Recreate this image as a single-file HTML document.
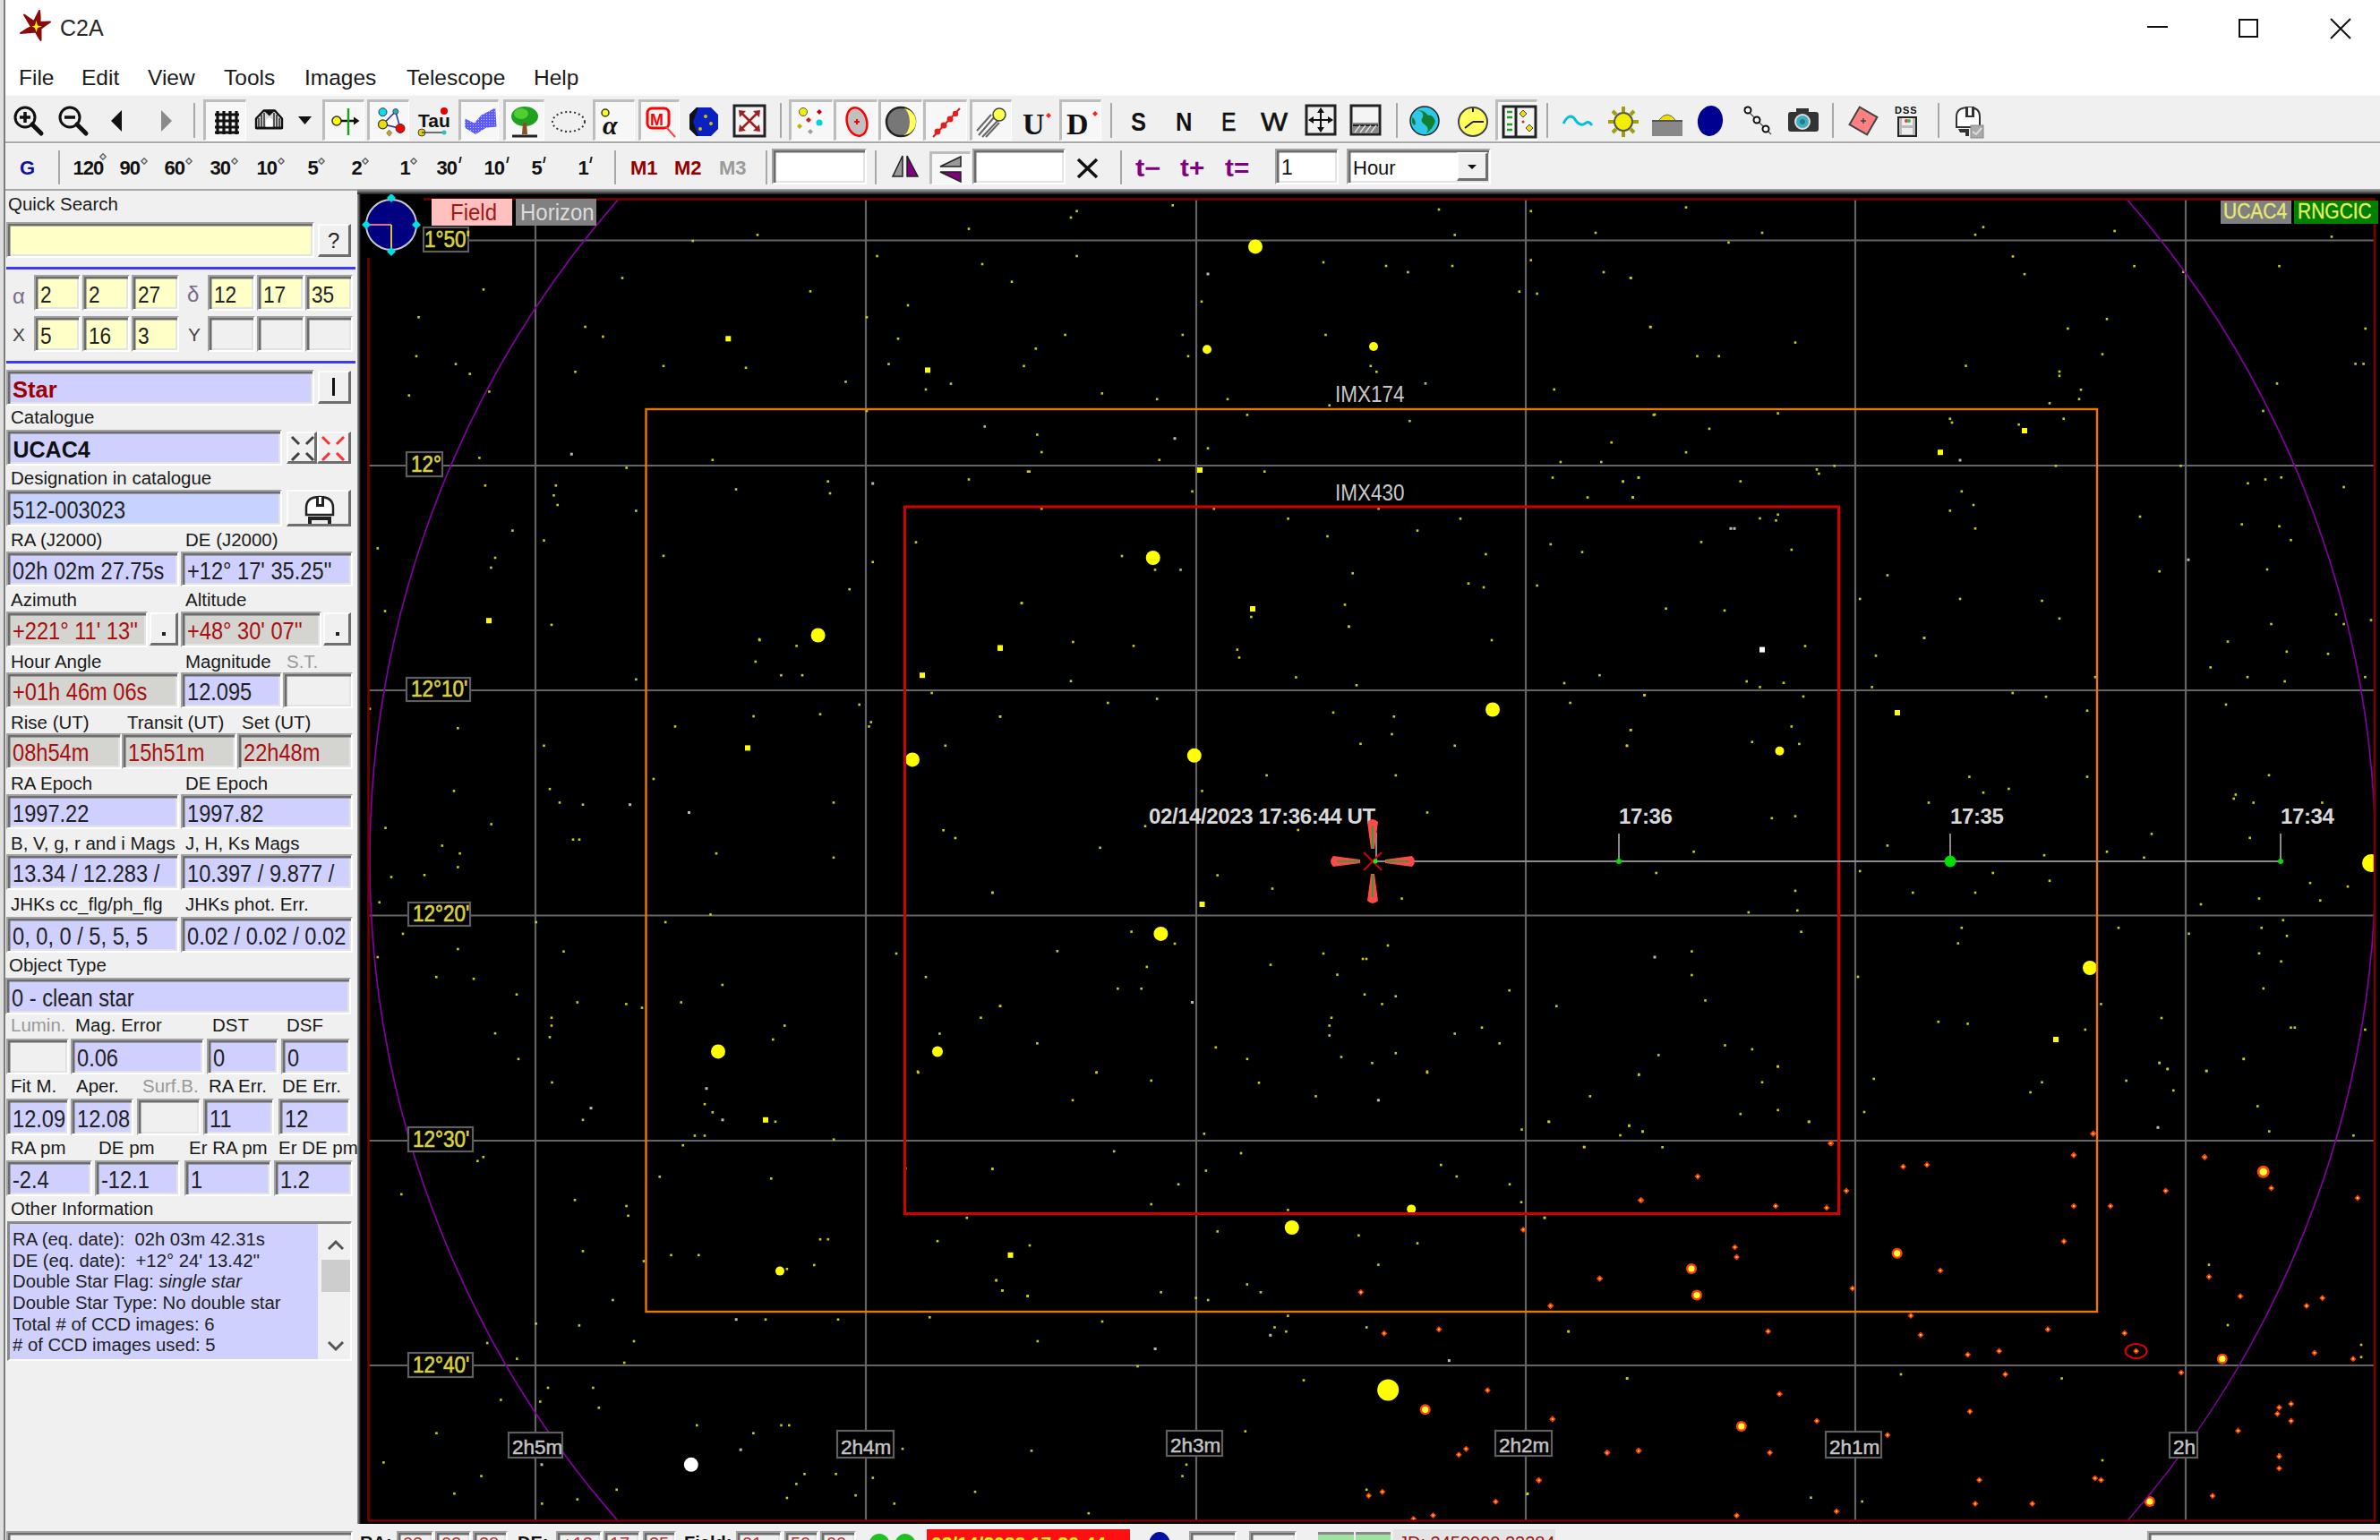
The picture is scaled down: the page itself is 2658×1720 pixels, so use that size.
<!DOCTYPE html>
<html><head><meta charset="utf-8"><title>C2A</title>
<style>
html,body{margin:0;padding:0;}
body{width:2658px;height:1720px;overflow:hidden;position:relative;background:#f0f0f0;font-family:"Liberation Sans", sans-serif;}
</style></head><body>
<div style="position:absolute;left:0px;top:0px;width:5px;height:1720px;background:#dedede;"></div>
<div style="position:absolute;left:4px;top:0px;width:2px;height:1720px;background:#7c7c7c;"></div>
<div style="position:absolute;left:6px;top:0px;width:2652px;height:105px;background:#ffffff;"></div>
<svg style="position:absolute;left:0px;top:0px" width="64" height="52" viewBox="0 0 64 52">
<path d="M44 12 Q45 19 44.5 25 L56 24.5 Q50 28.5 45.5 32 L45.5 45 Q42 40 40 35.5 L23 37 Q29 33 35 30 L27 16.5 Q33 21 38 24 Z" fill="#8a0a0a" stroke="#8a0a0a" stroke-width="2" stroke-linejoin="round"/>
<path d="M40.5 23 L42 28.5 L47 29.5 L42 31 L40.5 36 L39 31 L35.5 29.5 L39 28.5 Z" fill="#ffff00"/>
</svg>
<div style="position:absolute;left:67px;top:19.2px;font-size:25px;line-height:25px;color:#2a2a2a;font-weight:normal;white-space:nowrap;font-family:'Liberation Sans', sans-serif;">C2A</div>
<div style="position:absolute;left:2398px;top:29px;width:23px;height:2px;background:#111;"></div>
<div style="position:absolute;left:2500px;top:21px;width:22px;height:21px;border:2px solid #111;box-sizing:border-box;"></div>
<svg style="position:absolute;left:2602px;top:20px" width="24" height="24"><path d="M1 1 L23 23 M23 1 L1 23" stroke="#111" stroke-width="2"/></svg>
<div style="position:absolute;left:21px;top:74.7px;font-size:24.5px;line-height:24.5px;color:#1a1a1a;font-weight:normal;white-space:nowrap;font-family:'Liberation Sans', sans-serif;">File</div>
<div style="position:absolute;left:91px;top:74.7px;font-size:24.5px;line-height:24.5px;color:#1a1a1a;font-weight:normal;white-space:nowrap;font-family:'Liberation Sans', sans-serif;">Edit</div>
<div style="position:absolute;left:165px;top:74.7px;font-size:24.5px;line-height:24.5px;color:#1a1a1a;font-weight:normal;white-space:nowrap;font-family:'Liberation Sans', sans-serif;">View</div>
<div style="position:absolute;left:250px;top:74.7px;font-size:24.5px;line-height:24.5px;color:#1a1a1a;font-weight:normal;white-space:nowrap;font-family:'Liberation Sans', sans-serif;">Tools</div>
<div style="position:absolute;left:340px;top:74.7px;font-size:24.5px;line-height:24.5px;color:#1a1a1a;font-weight:normal;white-space:nowrap;font-family:'Liberation Sans', sans-serif;">Images</div>
<div style="position:absolute;left:454px;top:74.7px;font-size:24.5px;line-height:24.5px;color:#1a1a1a;font-weight:normal;white-space:nowrap;font-family:'Liberation Sans', sans-serif;">Telescope</div>
<div style="position:absolute;left:596px;top:74.7px;font-size:24.5px;line-height:24.5px;color:#1a1a1a;font-weight:normal;white-space:nowrap;font-family:'Liberation Sans', sans-serif;">Help</div>
<div style="position:absolute;left:6px;top:105px;width:2652px;height:108px;background:#f0f0f0;"></div>
<div style="position:absolute;left:6px;top:105px;width:2652px;height:2px;background:#fafafa;"></div>
<div style="position:absolute;left:6px;top:158px;width:2652px;height:2px;background:#a9a9a9;"></div>
<div style="position:absolute;left:6px;top:160px;width:2652px;height:1px;background:#ffffff;"></div>
<div style="position:absolute;left:6px;top:211px;width:2652px;height:2px;background:#a9a9a9;"></div>
<div style="position:absolute;left:227px;top:111px;width:48px;height:46px;box-sizing:border-box;background:#f7f7f7;border-top:3px solid #bdbdbd;border-left:3px solid #bdbdbd;border-bottom:1px solid #fff;border-right:1px solid #fff;"></div>
<div style="position:absolute;left:360px;top:111px;width:47px;height:46px;box-sizing:border-box;background:#f7f7f7;border-top:3px solid #bdbdbd;border-left:3px solid #bdbdbd;border-bottom:1px solid #fff;border-right:1px solid #fff;"></div>
<div style="position:absolute;left:410px;top:111px;width:47px;height:46px;box-sizing:border-box;background:#f7f7f7;border-top:3px solid #bdbdbd;border-left:3px solid #bdbdbd;border-bottom:1px solid #fff;border-right:1px solid #fff;"></div>
<div style="position:absolute;left:512px;top:111px;width:45px;height:46px;box-sizing:border-box;background:#f7f7f7;border-top:3px solid #bdbdbd;border-left:3px solid #bdbdbd;border-bottom:1px solid #fff;border-right:1px solid #fff;"></div>
<div style="position:absolute;left:562px;top:111px;width:46px;height:46px;box-sizing:border-box;background:#f7f7f7;border-top:3px solid #bdbdbd;border-left:3px solid #bdbdbd;border-bottom:1px solid #fff;border-right:1px solid #fff;"></div>
<div style="position:absolute;left:662px;top:111px;width:47px;height:46px;box-sizing:border-box;background:#f7f7f7;border-top:3px solid #bdbdbd;border-left:3px solid #bdbdbd;border-bottom:1px solid #fff;border-right:1px solid #fff;"></div>
<div style="position:absolute;left:713px;top:111px;width:46px;height:46px;box-sizing:border-box;background:#f7f7f7;border-top:3px solid #bdbdbd;border-left:3px solid #bdbdbd;border-bottom:1px solid #fff;border-right:1px solid #fff;"></div>
<div style="position:absolute;left:881px;top:111px;width:49px;height:46px;box-sizing:border-box;background:#f7f7f7;border-top:3px solid #bdbdbd;border-left:3px solid #bdbdbd;border-bottom:1px solid #fff;border-right:1px solid #fff;"></div>
<div style="position:absolute;left:931px;top:111px;width:49px;height:46px;box-sizing:border-box;background:#f7f7f7;border-top:3px solid #bdbdbd;border-left:3px solid #bdbdbd;border-bottom:1px solid #fff;border-right:1px solid #fff;"></div>
<div style="position:absolute;left:981px;top:111px;width:49px;height:46px;box-sizing:border-box;background:#f7f7f7;border-top:3px solid #bdbdbd;border-left:3px solid #bdbdbd;border-bottom:1px solid #fff;border-right:1px solid #fff;"></div>
<div style="position:absolute;left:1031px;top:111px;width:49px;height:46px;box-sizing:border-box;background:#f7f7f7;border-top:3px solid #bdbdbd;border-left:3px solid #bdbdbd;border-bottom:1px solid #fff;border-right:1px solid #fff;"></div>
<div style="position:absolute;left:1083px;top:111px;width:47px;height:46px;box-sizing:border-box;background:#f7f7f7;border-top:3px solid #bdbdbd;border-left:3px solid #bdbdbd;border-bottom:1px solid #fff;border-right:1px solid #fff;"></div>
<div style="position:absolute;left:1183px;top:111px;width:47px;height:46px;box-sizing:border-box;background:#f7f7f7;border-top:3px solid #bdbdbd;border-left:3px solid #bdbdbd;border-bottom:1px solid #fff;border-right:1px solid #fff;"></div>
<div style="position:absolute;left:1670px;top:111px;width:47px;height:46px;box-sizing:border-box;background:#f7f7f7;border-top:3px solid #bdbdbd;border-left:3px solid #bdbdbd;border-bottom:1px solid #fff;border-right:1px solid #fff;"></div>
<div style="position:absolute;left:216px;top:115px;width:2px;height:39px;background:#a8a8a8;"></div>
<div style="position:absolute;left:871px;top:115px;width:2px;height:39px;background:#a8a8a8;"></div>
<div style="position:absolute;left:1240px;top:115px;width:2px;height:39px;background:#a8a8a8;"></div>
<div style="position:absolute;left:1559px;top:115px;width:2px;height:39px;background:#a8a8a8;"></div>
<div style="position:absolute;left:1727px;top:115px;width:2px;height:39px;background:#a8a8a8;"></div>
<div style="position:absolute;left:2046px;top:115px;width:2px;height:39px;background:#a8a8a8;"></div>
<div style="position:absolute;left:2164px;top:115px;width:2px;height:39px;background:#a8a8a8;"></div>
<div style="position:absolute;left:1263px;top:121.9px;font-size:29px;line-height:29px;color:#111;font-weight:bold;white-space:nowrap;font-family:'Liberation Sans', sans-serif;transform:scaleX(0.88);transform-origin:0 0">S</div>
<div style="position:absolute;left:1313px;top:121.9px;font-size:29px;line-height:29px;color:#111;font-weight:bold;white-space:nowrap;font-family:'Liberation Sans', sans-serif;transform:scaleX(0.88);transform-origin:0 0">N</div>
<div style="position:absolute;left:1364px;top:121.9px;font-size:29px;line-height:29px;color:#111;font-weight:normal;white-space:nowrap;font-family:'Liberation Sans', sans-serif;transform:scaleX(0.85);transform-origin:0 0;-webkit-text-stroke:0.6px #111">E</div>
<div style="position:absolute;left:1408px;top:121.9px;font-size:29px;line-height:29px;color:#111;font-weight:normal;white-space:nowrap;font-family:'Liberation Sans', sans-serif;transform:scaleX(1.1);transform-origin:0 0;-webkit-text-stroke:0.6px #111">W</div>
<svg style="position:absolute;left:14px;top:117px" width="36" height="36" viewBox="0 0 36 36"><circle cx="14" cy="14" r="11" fill="none" stroke="#111" stroke-width="3"/><path d="M22 22 L32 32" stroke="#111" stroke-width="5" stroke-linecap="round"/><path d="M8 14 H20 M14 8 V20" stroke="#111" stroke-width="3.5"/></svg>
<svg style="position:absolute;left:64px;top:117px" width="36" height="36" viewBox="0 0 36 36"><circle cx="14" cy="14" r="11" fill="none" stroke="#111" stroke-width="3"/><path d="M22 22 L32 32" stroke="#111" stroke-width="5" stroke-linecap="round"/><path d="M8 14 H20" stroke="#111" stroke-width="3.5"/></svg>
<svg style="position:absolute;left:120px;top:120px" width="22" height="30" viewBox="0 0 22 30"><path d="M4 15 L16 3 L16 27 Z" fill="#111"/></svg>
<svg style="position:absolute;left:176px;top:120px" width="22" height="30" viewBox="0 0 22 30"><path d="M16 15 L4 3 L4 27 Z" fill="#8a8a8a"/></svg>
<svg style="position:absolute;left:238px;top:122px" width="30" height="30" viewBox="0 0 30 30"><path d="M5 2 V28 M12 2 V28 M19 2 V28 M26 2 V28 M2 6 H29 M2 13 H29 M2 20 H29 M2 26 H29" stroke="#111" stroke-width="3.2"/></svg>
<svg style="position:absolute;left:283px;top:122px" width="36" height="28" viewBox="0 0 36 28"><path d="M3 21 L3 10.5 L11.5 1.5 L24 1.5 L32 10.5 L32 21 Z" fill="#d8d8d8" stroke="#111" stroke-width="2.4" stroke-linejoin="round"/><path d="M6 20 V10 M9 20 V6 M12 20 V4 M23 20 V4 M26 20 V6 M29 20 V10" stroke="#333" stroke-width="1.6"/><path d="M11.5 1.5 L24 1.5 L17.8 7.5 Z" fill="#111"/><path d="M14 20 V12 L17.8 9 L21.5 12 V20 Z" fill="#fff"/><path d="M3 21 H32" stroke="#111" stroke-width="2.6"/></svg>
<svg style="position:absolute;left:332px;top:129px" width="17" height="11" viewBox="0 0 17 11"><path d="M1 1 L16 1 L8.5 10 Z" fill="#111"/></svg>
<svg style="position:absolute;left:366px;top:118px" width="40" height="36" viewBox="0 0 40 36"><circle cx="10" cy="17" r="5" fill="#ffff00" stroke="#333" stroke-width="1.5"/><path d="M15 17 H31" stroke="#111" stroke-width="2.5"/><path d="M29 12.5 L35.5 17 L29 21.5 Z" fill="#111"/><path d="M23 3 V33" stroke="#20a020" stroke-width="2.5"/></svg>
<svg style="position:absolute;left:416px;top:116px" width="40" height="40" viewBox="0 0 40 40"><path d="M25.8 8.5 L11.5 22.9 L31 27.4 Z" fill="none" stroke="#3030b0" stroke-width="1.6"/><circle cx="11.5" cy="9.2" r="4.5" fill="#00e0f0" stroke="#333" stroke-width="1"/><circle cx="25.8" cy="8.5" r="3" fill="#20b0c0" stroke="#333" stroke-width="0.8"/><circle cx="11.5" cy="22.9" r="5" fill="#e8e000" stroke="#333" stroke-width="1.2"/><circle cx="31" cy="27.4" r="5" fill="#ff0000" stroke="#333" stroke-width="1"/><path d="M18.7 29 L21.7 32.6 L18.7 36.2 L15.7 32.6 Z" fill="#c0a820" stroke="#555" stroke-width="0.6"/></svg>
<svg style="position:absolute;left:466px;top:118px" width="38" height="36" viewBox="0 0 38 36"><text x="1" y="24" font-family="Liberation Sans" font-weight="bold" font-size="21" fill="#111">Tau</text><circle cx="30" cy="6" r="4" fill="#e00000"/><circle cx="5" cy="30" r="4" fill="#e0d000" stroke="#444" stroke-width="1"/><path d="M5 30 H30" stroke="#444" stroke-width="1.5"/><circle cx="30" cy="30" r="2.5" fill="#30c0c0"/></svg>
<svg style="position:absolute;left:516px;top:118px" width="42" height="36" viewBox="0 0 42 36"><defs><pattern id="dith" width="3" height="3" patternUnits="userSpaceOnUse"><rect width="3" height="3" fill="#5a5aff"/><rect width="1" height="1" fill="#c8c8ff"/></pattern></defs><path d="M3.3 14.4 L13.8 19.6 L21.6 10.4 L37.2 2.6 L38.5 23.5 L26.8 24.8 L15 32 L3.3 24.8 Z" fill="url(#dith)"/></svg>
<svg style="position:absolute;left:567px;top:117px" width="38" height="38" viewBox="0 0 38 38"><ellipse cx="19" cy="13" rx="15" ry="11" fill="#20a020"/><ellipse cx="15" cy="10" rx="8" ry="6" fill="#50d030"/><path d="M17 20 L16 33 L22 33 L21 20 Z" fill="#8a5020"/><path d="M5 35 H33" stroke="#222" stroke-width="3"/></svg>
<svg style="position:absolute;left:614px;top:122px" width="42" height="28" viewBox="0 0 42 28"><ellipse cx="21" cy="14" rx="18" ry="11" fill="none" stroke="#333" stroke-width="2" stroke-dasharray="2 3"/></svg>
<svg style="position:absolute;left:670px;top:120px" width="36" height="34" viewBox="0 0 36 34"><circle cx="6" cy="6" r="4" fill="#ffff00" stroke="#333" stroke-width="1.5"/><text x="3" y="30" font-family="Liberation Serif" font-style="italic" font-weight="bold" font-size="30" fill="#111">α</text></svg>
<svg style="position:absolute;left:720px;top:118px" width="38" height="38" viewBox="0 0 38 38"><rect x="3" y="3" width="24" height="22" rx="5" fill="none" stroke="#ff0000" stroke-width="3"/><text x="6" y="22" font-family="Liberation Sans" font-weight="bold" font-size="18" fill="#ff0000">M</text><path d="M24 24 L34 35" stroke="#ff4040" stroke-width="2"/></svg>
<svg style="position:absolute;left:768px;top:118px" width="36" height="36" viewBox="0 0 36 36"><path d="M10 2 H26 L34 10 V26 L26 34 H10 L2 26 V10 Z" fill="#0a20c0"/><path d="M2 10 L10 2 L12 2 L6 18 L12 34 L10 34 L2 26 Z" fill="#111"/><circle cx="20" cy="12" r="2" fill="#d0c000"/><circle cx="26" cy="20" r="2" fill="#d0c000"/><circle cx="14" cy="26" r="2" fill="#d0c000"/></svg>
<svg style="position:absolute;left:818px;top:116px" width="38" height="38" viewBox="0 0 38 38"><rect x="2" y="2" width="34" height="34" fill="#f4f4f4" stroke="#222" stroke-width="3"/><path d="M9 9 L29 29 M29 9 L9 29" stroke="#a02020" stroke-width="2.5"/><path d="M7 7 L15 8 L8 15 Z M31 7 L23 8 L30 15 Z M7 31 L15 30 L8 23 Z M31 31 L23 30 L30 23 Z" fill="#a02020"/></svg>
<svg style="position:absolute;left:887px;top:118px" width="40" height="36" viewBox="0 0 40 36"><circle cx="10" cy="7" r="4.5" fill="#f0f000" stroke="#555" stroke-width="1"/><path d="M28 4 L31 7 L28 10 L25 7 Z" fill="#c00000"/><path d="M16 13 L19 16 L16 19 L13 16 Z" fill="#c02020"/><circle cx="28" cy="19" r="3.5" fill="#00d0e0"/><path d="M6 20 L9 23 L6 26 L3 23 Z" fill="#c0b000"/><path d="M18 26 L21 29 L18 32 L15 29 Z" fill="#a0a0a0"/></svg>
<svg style="position:absolute;left:940px;top:117px" width="34" height="38" viewBox="0 0 34 38"><ellipse cx="17" cy="19" rx="11" ry="16" fill="#c0c0c0" stroke="#ff0000" stroke-width="2.5" transform="rotate(-15 17 19)"/><path d="M17 16 V22 M14 19 H20" stroke="#ff0000" stroke-width="2"/></svg>
<svg style="position:absolute;left:988px;top:118px" width="36" height="36" viewBox="0 0 36 36"><circle cx="18" cy="18" r="16" fill="#777" stroke="#222" stroke-width="2.5"/><path d="M20 3 A15 15 0 0 1 20 33 A8 15 0 0 0 20 3 Z" fill="#ffff60"/></svg>
<svg style="position:absolute;left:1039px;top:118px" width="36" height="38" viewBox="0 0 36 38"><path d="M3 35 L33 3" stroke="#d02020" stroke-width="2"/><circle cx="8" cy="29" r="3.5" fill="#e02020"/><circle cx="15" cy="22" r="3.5" fill="#e02020"/><circle cx="22" cy="15" r="3.5" fill="#e02020"/><circle cx="28" cy="9" r="3.2" fill="#e02020"/></svg>
<svg style="position:absolute;left:1089px;top:118px" width="38" height="36" viewBox="0 0 38 36"><path d="M4 33 L22 12 M2 28 L18 10 M8 35 L26 16 M12 35 L27 19" stroke="#666" stroke-width="2"/><circle cx="27" cy="10" r="7" fill="#ffff50" stroke="#444" stroke-width="1.5"/></svg>
<svg style="position:absolute;left:1140px;top:118px" width="38" height="36" viewBox="0 0 38 36"><text x="2" y="32" font-family="Liberation Serif" font-weight="bold" font-size="34" fill="#111">U</text><path d="M31 8 L34 11 L31 14 L28 11 Z" fill="#ff2020"/></svg>
<svg style="position:absolute;left:1189px;top:118px" width="40" height="36" viewBox="0 0 40 36"><text x="2" y="32" font-family="Liberation Serif" font-weight="bold" font-size="34" fill="#111">D</text><path d="M34 6 L37 9 L34 12 L31 9 Z" fill="#ff2020"/></svg>
<svg style="position:absolute;left:1457px;top:116px" width="36" height="36" viewBox="0 0 36 36"><rect x="2" y="2" width="32" height="32" fill="none" stroke="#222" stroke-width="3"/><path d="M18 5 V31 M5 18 H31" stroke="#111" stroke-width="2"/><path d="M18 4 L14 10 H22 Z M18 32 L14 26 H22 Z M4 18 L10 14 V22 Z M32 18 L26 14 V22 Z" fill="#111"/></svg>
<svg style="position:absolute;left:1507px;top:116px" width="36" height="36" viewBox="0 0 36 36"><rect x="2" y="2" width="32" height="32" fill="#f4f4f4" stroke="#222" stroke-width="3"/><rect x="4" y="21" width="28" height="11" fill="#888"/><path d="M4 24 H32" stroke="#222" stroke-width="2"/><path d="M6 32 L12 24 M12 32 L18 24 M18 32 L24 24 M24 32 L30 24" stroke="#ddd" stroke-width="1.5"/></svg>
<svg style="position:absolute;left:1573px;top:117px" width="36" height="36" viewBox="0 0 36 36"><circle cx="18" cy="18" r="16" fill="#30c8e8" stroke="#222" stroke-width="1.5"/><path d="M10 6 Q18 8 16 14 Q12 18 18 22 Q24 26 20 32 Q28 26 30 18 Q26 10 22 12 Q18 6 10 6 Z" fill="#108030"/><path d="M4 14 Q8 16 8 22 Q6 24 4 20 Z" fill="#108030"/></svg>
<svg style="position:absolute;left:1626px;top:117px" width="38" height="38" viewBox="0 0 38 38"><circle cx="19" cy="19" r="16" fill="#ffff60" stroke="#444" stroke-width="2"/><path d="M19 4 V8 M19 19 L10 26 M19 19 H31" stroke="#222" stroke-width="2"/></svg>
<svg style="position:absolute;left:1677px;top:117px" width="40" height="38" viewBox="0 0 40 38"><rect x="2" y="2" width="36" height="34" fill="#f4f4f4" stroke="#222" stroke-width="3"/><path d="M16 2 V36" stroke="#222" stroke-width="3"/><path d="M6 8 H12 M6 14 H12 M6 22 H12 M6 28 H12" stroke="#20a020" stroke-width="2.5"/><path d="M24 6 L28 10 L24 14 L20 10 Z M31 22 L35 26 L31 30 L27 26 Z" fill="#f0e000" stroke="#444" stroke-width="1"/><circle cx="24" cy="19" r="1.5" fill="#c03030"/></svg>
<svg style="position:absolute;left:1744px;top:122px" width="36" height="26" viewBox="0 0 36 26"><path d="M2 16 Q8 4 14 10 Q20 20 26 16 Q30 12 34 18" fill="none" stroke="#00c0e0" stroke-width="3"/></svg>
<svg style="position:absolute;left:1794px;top:117px" width="38" height="38" viewBox="0 0 38 38"><circle cx="19" cy="19" r="10" fill="#f0f000" stroke="#555" stroke-width="2"/><path d="M19 2 V8 M19 30 V36 M2 19 H8 M30 19 H36 M7 7 L11 11 M27 27 L31 31 M31 7 L27 11 M7 31 L11 27" stroke="#a0a000" stroke-width="4"/></svg>
<svg style="position:absolute;left:1842px;top:117px" width="40" height="38" viewBox="0 0 40 38"><path d="M10 18 Q20 4 30 18 Z" fill="#f0e000" stroke="#666" stroke-width="1"/><rect x="3" y="17" width="34" height="18" fill="#888"/><path d="M3 18 H37" stroke="#444" stroke-width="1.5"/></svg>
<svg style="position:absolute;left:1892px;top:116px" width="36" height="38" viewBox="0 0 36 38"><ellipse cx="18" cy="19" rx="14" ry="17" fill="#000090" transform="rotate(10 18 19)"/></svg>
<svg style="position:absolute;left:1944px;top:116px" width="38" height="38" viewBox="0 0 38 38"><path d="M4 4 L34 34" stroke="#555" stroke-width="1.5"/><circle cx="8" cy="7" r="3.5" fill="#fff" stroke="#111" stroke-width="2"/><circle cx="18" cy="18" r="3.5" fill="#fff" stroke="#111" stroke-width="2"/><circle cx="28" cy="28" r="3.5" fill="#fff" stroke="#111" stroke-width="2"/></svg>
<svg style="position:absolute;left:1995px;top:117px" width="38" height="34" viewBox="0 0 38 34"><rect x="2" y="8" width="34" height="22" rx="3" fill="#333"/><rect x="11" y="4" width="14" height="6" fill="#333"/><circle cx="18" cy="19" r="8" fill="#40b0c0" stroke="#ddd" stroke-width="2"/><circle cx="18" cy="19" r="3" fill="#208090"/></svg>
<svg style="position:absolute;left:2062px;top:116px" width="38" height="38" viewBox="0 0 38 38"><path d="M19 3 L35 19 L19 35 L3 19 Z" fill="#ff8080" stroke="#444" stroke-width="2" transform="rotate(-15 19 19)"/><path d="M19 16 V22 M16 19 H22" stroke="#444" stroke-width="1.5"/></svg>
<svg style="position:absolute;left:2115px;top:116px" width="34" height="38" viewBox="0 0 34 38"><text x="1" y="11" font-family="Liberation Sans" font-weight="bold" font-size="11" fill="#111" letter-spacing="1">DSS</text><rect x="5" y="15" width="20" height="21" fill="#bbb" stroke="#222" stroke-width="2"/><rect x="9" y="16" width="12" height="8" fill="#eee"/><rect x="9" y="27" width="12" height="7" fill="#eee"/><circle cx="14" cy="19" r="2" fill="#e04040"/><circle cx="17" cy="19" r="2" fill="#40c040"/></svg>
<svg style="position:absolute;left:2181px;top:116px" width="38" height="40" viewBox="0 0 38 40"><path d="M4 14 Q4 4 18 4 Q30 4 30 14 L30 26 L4 26 Z" fill="#fff" stroke="#333" stroke-width="2"/><rect x="14" y="3" width="10" height="12" fill="#333"/><rect x="17" y="4" width="4" height="9" fill="#fff"/><path d="M6 28 H18 V36 H14 V32 H8 Z" fill="#333"/><rect x="20" y="24" width="14" height="14" fill="#aaa" stroke="#888" stroke-width="1"/><path d="M22 31 L26 34 L32 27" stroke="#ddd" stroke-width="2" fill="none"/></svg>
<div style="position:absolute;left:22px;top:176.7px;font-size:22px;line-height:22px;color:#1010a0;font-weight:bold;white-space:nowrap;font-family:'Liberation Sans', sans-serif;">G</div>
<div style="position:absolute;left:65px;top:168px;width:2px;height:38px;background:#a8a8a8;"></div>
<div style="position:absolute;left:81.5px;top:177.2px;font-size:22px;line-height:22px;color:#111;font-weight:bold;white-space:nowrap;font-family:'Liberation Sans', sans-serif;letter-spacing:-1px">120</div>
<svg style="position:absolute;left:110.7px;top:171px" width="8" height="8"><path d="M4 0.8 L7.2 4 L4 7.2 L0.8 4 Z" fill="#e8e8e8" stroke="#666" stroke-width="1.5"/></svg>
<div style="position:absolute;left:133.5px;top:177.2px;font-size:22px;line-height:22px;color:#111;font-weight:bold;white-space:nowrap;font-family:'Liberation Sans', sans-serif;letter-spacing:-1px">90</div>
<svg style="position:absolute;left:156.5px;top:176px" width="8" height="8"><path d="M4 0.8 L7.2 4 L4 7.2 L0.8 4 Z" fill="#e8e8e8" stroke="#666" stroke-width="1.5"/></svg>
<div style="position:absolute;left:183.5px;top:177.2px;font-size:22px;line-height:22px;color:#111;font-weight:bold;white-space:nowrap;font-family:'Liberation Sans', sans-serif;letter-spacing:-1px">60</div>
<svg style="position:absolute;left:206.5px;top:176px" width="8" height="8"><path d="M4 0.8 L7.2 4 L4 7.2 L0.8 4 Z" fill="#e8e8e8" stroke="#666" stroke-width="1.5"/></svg>
<div style="position:absolute;left:234.5px;top:177.2px;font-size:22px;line-height:22px;color:#111;font-weight:bold;white-space:nowrap;font-family:'Liberation Sans', sans-serif;letter-spacing:-1px">30</div>
<svg style="position:absolute;left:257.5px;top:176px" width="8" height="8"><path d="M4 0.8 L7.2 4 L4 7.2 L0.8 4 Z" fill="#e8e8e8" stroke="#666" stroke-width="1.5"/></svg>
<div style="position:absolute;left:286.5px;top:177.2px;font-size:22px;line-height:22px;color:#111;font-weight:bold;white-space:nowrap;font-family:'Liberation Sans', sans-serif;letter-spacing:-1px">10</div>
<svg style="position:absolute;left:309.5px;top:176px" width="8" height="8"><path d="M4 0.8 L7.2 4 L4 7.2 L0.8 4 Z" fill="#e8e8e8" stroke="#666" stroke-width="1.5"/></svg>
<div style="position:absolute;left:343.5px;top:177.2px;font-size:22px;line-height:22px;color:#111;font-weight:bold;white-space:nowrap;font-family:'Liberation Sans', sans-serif;letter-spacing:-1px">5</div>
<svg style="position:absolute;left:355.2px;top:176px" width="8" height="8"><path d="M4 0.8 L7.2 4 L4 7.2 L0.8 4 Z" fill="#e8e8e8" stroke="#666" stroke-width="1.5"/></svg>
<div style="position:absolute;left:392.5px;top:177.2px;font-size:22px;line-height:22px;color:#111;font-weight:bold;white-space:nowrap;font-family:'Liberation Sans', sans-serif;letter-spacing:-1px">2</div>
<svg style="position:absolute;left:404.2px;top:176px" width="8" height="8"><path d="M4 0.8 L7.2 4 L4 7.2 L0.8 4 Z" fill="#e8e8e8" stroke="#666" stroke-width="1.5"/></svg>
<div style="position:absolute;left:446.5px;top:177.2px;font-size:22px;line-height:22px;color:#111;font-weight:bold;white-space:nowrap;font-family:'Liberation Sans', sans-serif;letter-spacing:-1px">1</div>
<svg style="position:absolute;left:458.2px;top:176px" width="8" height="8"><path d="M4 0.8 L7.2 4 L4 7.2 L0.8 4 Z" fill="#e8e8e8" stroke="#666" stroke-width="1.5"/></svg>
<div style="position:absolute;left:487.5px;top:177.2px;font-size:22px;line-height:22px;color:#111;font-weight:bold;white-space:nowrap;font-family:'Liberation Sans', sans-serif;letter-spacing:-1px">30</div>
<div style="position:absolute;left:512.5px;top:175px;width:2.4px;height:7px;background:#222;transform:skewX(-12deg)"></div>
<div style="position:absolute;left:540.5px;top:177.2px;font-size:22px;line-height:22px;color:#111;font-weight:bold;white-space:nowrap;font-family:'Liberation Sans', sans-serif;letter-spacing:-1px">10</div>
<div style="position:absolute;left:565.5px;top:175px;width:2.4px;height:7px;background:#222;transform:skewX(-12deg)"></div>
<div style="position:absolute;left:593.5px;top:177.2px;font-size:22px;line-height:22px;color:#111;font-weight:bold;white-space:nowrap;font-family:'Liberation Sans', sans-serif;letter-spacing:-1px">5</div>
<div style="position:absolute;left:607.2px;top:175px;width:2.4px;height:7px;background:#222;transform:skewX(-12deg)"></div>
<div style="position:absolute;left:645.5px;top:177.2px;font-size:22px;line-height:22px;color:#111;font-weight:bold;white-space:nowrap;font-family:'Liberation Sans', sans-serif;letter-spacing:-1px">1</div>
<div style="position:absolute;left:659.2px;top:175px;width:2.4px;height:7px;background:#222;transform:skewX(-12deg)"></div>
<div style="position:absolute;left:686px;top:168px;width:2px;height:38px;background:#a8a8a8;"></div>
<div style="position:absolute;left:704px;top:177.2px;font-size:22px;line-height:22px;color:#900000;font-weight:bold;white-space:nowrap;font-family:'Liberation Sans', sans-serif;">M1</div>
<div style="position:absolute;left:753px;top:177.2px;font-size:22px;line-height:22px;color:#900000;font-weight:bold;white-space:nowrap;font-family:'Liberation Sans', sans-serif;">M2</div>
<div style="position:absolute;left:803px;top:177.2px;font-size:22px;line-height:22px;color:#9a9a9a;font-weight:bold;white-space:nowrap;font-family:'Liberation Sans', sans-serif;">M3</div>
<div style="position:absolute;left:855px;top:168px;width:2px;height:38px;background:#a8a8a8;"></div>
<div style="position:absolute;left:862px;top:165.5px;width:106px;height:40.5px;box-sizing:border-box;background:#ffffff;border-top:2px solid #a3a3a3;border-left:2px solid #a3a3a3;border-bottom:2px solid #ffffff;border-right:2px solid #ffffff;box-shadow:inset 2.5px 2.5px 0 #6c6c6c, inset -2px -2px 0 #e3e3e3;overflow:hidden;"></div>
<div style="position:absolute;left:977px;top:168px;width:2px;height:38px;background:#a8a8a8;"></div>
<svg style="position:absolute;left:994px;top:172px" width="34" height="28" viewBox="0 0 34 28"><path d="M14 2 L3 25 L14 25 Z" fill="#9a9a9a" stroke="#222" stroke-width="1.5"/><path d="M19 2 L31 25 L19 25 Z" fill="#800080" stroke="#222" stroke-width="1.5"/></svg>
<div style="position:absolute;left:1038px;top:169px;width:46px;height:37px;box-sizing:border-box;background:#f7f7f7;border-top:3px solid #bdbdbd;border-left:3px solid #bdbdbd;border-bottom:1px solid #fff;border-right:1px solid #fff;"></div>
<svg style="position:absolute;left:1047px;top:172px" width="30" height="34" viewBox="0 0 30 34"><path d="M26 3 L3 14 L26 14 Z" fill="#9a9a9a" stroke="#222" stroke-width="1.5"/><path d="M26 31 L3 20 L26 20 Z" fill="#800080" stroke="#222" stroke-width="1.5"/></svg>
<div style="position:absolute;left:1086px;top:165.5px;width:104px;height:40.5px;box-sizing:border-box;background:#ffffff;border-top:2px solid #a3a3a3;border-left:2px solid #a3a3a3;border-bottom:2px solid #ffffff;border-right:2px solid #ffffff;box-shadow:inset 2.5px 2.5px 0 #6c6c6c, inset -2px -2px 0 #e3e3e3;overflow:hidden;"></div>
<svg style="position:absolute;left:1201px;top:175px" width="28" height="26" viewBox="0 0 28 26"><path d="M3 3 L24 23 M24 3 L3 23" stroke="#111" stroke-width="3.5"/></svg>
<div style="position:absolute;left:1251px;top:168px;width:2px;height:38px;background:#a8a8a8;"></div>
<div style="position:absolute;left:1268px;top:174.6px;font-size:27px;line-height:27px;color:#800080;font-weight:bold;white-space:nowrap;font-family:'Liberation Sans', sans-serif;transform:scaleX(1.15);transform-origin:0 0">t−</div>
<div style="position:absolute;left:1318px;top:174.6px;font-size:27px;line-height:27px;color:#800080;font-weight:bold;white-space:nowrap;font-family:'Liberation Sans', sans-serif;transform:scaleX(1.1);transform-origin:0 0">t+</div>
<div style="position:absolute;left:1368px;top:174.6px;font-size:27px;line-height:27px;color:#800080;font-weight:bold;white-space:nowrap;font-family:'Liberation Sans', sans-serif;transform:scaleX(1.1);transform-origin:0 0">t=</div>
<div style="position:absolute;left:1424px;top:165.5px;width:71px;height:40.5px;box-sizing:border-box;background:#ffffff;border-top:2px solid #a3a3a3;border-left:2px solid #a3a3a3;border-bottom:2px solid #ffffff;border-right:2px solid #ffffff;box-shadow:inset 2.5px 2.5px 0 #6c6c6c, inset -2px -2px 0 #e3e3e3;overflow:hidden;"><div style="position:absolute;left:5px;top:8.4px;font-size:23.0px;line-height:23.0px;color:#111;font-weight:normal;letter-spacing:0px;white-space:nowrap;transform:scaleX(1);transform-origin:0 0">1</div></div>
<div style="position:absolute;left:1504px;top:165.5px;width:161px;height:40.5px;box-sizing:border-box;background:#ffffff;border-top:2px solid #a3a3a3;border-left:2px solid #a3a3a3;border-bottom:2px solid #ffffff;border-right:2px solid #ffffff;box-shadow:inset 2.5px 2.5px 0 #6c6c6c, inset -2px -2px 0 #e3e3e3;overflow:hidden;"><div style="position:absolute;left:5px;top:9.2px;font-size:22.0px;line-height:22.0px;color:#111;font-weight:normal;letter-spacing:0px;white-space:nowrap;transform:scaleX(1);transform-origin:0 0">Hour</div></div>
<div style="position:absolute;left:1627px;top:170px;width:35px;height:32px;box-sizing:border-box;background:#f0f0f0;border-top:2px solid #fdfdfd;border-left:2px solid #fdfdfd;border-bottom:3px solid #6e6e6e;border-right:3px solid #6e6e6e;overflow:hidden"><svg width="30" height="26" style="position:absolute;left:0;top:0"><path d="M10 12 L20 12 L15 17 Z" fill="#111"/></svg></div>
<div style="position:absolute;left:6px;top:213px;width:393px;height:1489px;background:#f0f0f0;"></div>
<div style="position:absolute;left:399px;top:213px;width:4px;height:1489px;background:linear-gradient(90deg,#a0a0a0,#555 50%,#000);"></div>
<div style="position:absolute;left:399px;top:211px;width:2259px;height:6px;background:linear-gradient(180deg,#a9a9a9,#6a6a6a 50%,#1a1a1a);"></div>
<div style="position:absolute;left:9px;top:218.8px;font-size:19.5px;line-height:19.5px;color:#1a1a1a;font-weight:normal;white-space:nowrap;font-family:'Liberation Sans', sans-serif;transform:scaleX(1.05);transform-origin:0 0">Quick Search</div>
<div style="position:absolute;left:7px;top:247.5px;width:344px;height:40.5px;box-sizing:border-box;background:#ffffc8;border-top:2px solid #a3a3a3;border-left:2px solid #a3a3a3;border-bottom:2px solid #ffffff;border-right:2px solid #ffffff;box-shadow:inset 2.5px 2.5px 0 #6c6c6c, inset -2px -2px 0 #e3e3e3;overflow:hidden;"></div>
<div style="position:absolute;left:355px;top:250px;width:37px;height:37px;box-sizing:border-box;background:#f0f0f0;border-top:2px solid #fdfdfd;border-left:2px solid #fdfdfd;border-bottom:3px solid #6e6e6e;border-right:3px solid #6e6e6e;overflow:hidden"><div style="position:absolute;left:9px;top:3px;font-size:24px;color:#222">?</div></div>
<div style="position:absolute;left:7px;top:298px;width:390px;height:3px;background:#3a3aff;"></div>
<div style="position:absolute;left:14px;top:319.1px;font-size:24px;line-height:24px;color:#7a6a8a;font-weight:normal;white-space:nowrap;font-family:'Liberation Sans', sans-serif;">α</div>
<div style="position:absolute;left:209px;top:317.1px;font-size:24px;line-height:24px;color:#7a6a8a;font-weight:normal;white-space:nowrap;font-family:'Liberation Sans', sans-serif;">δ</div>
<div style="position:absolute;left:38px;top:306.5px;width:52px;height:40.5px;box-sizing:border-box;background:#ffffc8;border-top:2px solid #a3a3a3;border-left:2px solid #a3a3a3;border-bottom:2px solid #ffffff;border-right:2px solid #ffffff;box-shadow:inset 2.5px 2.5px 0 #6c6c6c, inset -2px -2px 0 #e3e3e3;overflow:hidden;"><div style="position:absolute;left:5px;top:8.0px;font-size:25.9px;line-height:25.9px;color:#222;font-weight:normal;letter-spacing:0px;white-space:nowrap;transform:scaleX(0.875);transform-origin:0 0">2</div></div>
<div style="position:absolute;left:92px;top:306.5px;width:53px;height:40.5px;box-sizing:border-box;background:#ffffc8;border-top:2px solid #a3a3a3;border-left:2px solid #a3a3a3;border-bottom:2px solid #ffffff;border-right:2px solid #ffffff;box-shadow:inset 2.5px 2.5px 0 #6c6c6c, inset -2px -2px 0 #e3e3e3;overflow:hidden;"><div style="position:absolute;left:5px;top:8.0px;font-size:25.9px;line-height:25.9px;color:#222;font-weight:normal;letter-spacing:0px;white-space:nowrap;transform:scaleX(0.875);transform-origin:0 0">2</div></div>
<div style="position:absolute;left:147px;top:306.5px;width:53px;height:40.5px;box-sizing:border-box;background:#ffffc8;border-top:2px solid #a3a3a3;border-left:2px solid #a3a3a3;border-bottom:2px solid #ffffff;border-right:2px solid #ffffff;box-shadow:inset 2.5px 2.5px 0 #6c6c6c, inset -2px -2px 0 #e3e3e3;overflow:hidden;"><div style="position:absolute;left:5px;top:8.0px;font-size:25.9px;line-height:25.9px;color:#222;font-weight:normal;letter-spacing:0px;white-space:nowrap;transform:scaleX(0.875);transform-origin:0 0">27</div></div>
<div style="position:absolute;left:232px;top:306.5px;width:53px;height:40.5px;box-sizing:border-box;background:#ffffc8;border-top:2px solid #a3a3a3;border-left:2px solid #a3a3a3;border-bottom:2px solid #ffffff;border-right:2px solid #ffffff;box-shadow:inset 2.5px 2.5px 0 #6c6c6c, inset -2px -2px 0 #e3e3e3;overflow:hidden;"><div style="position:absolute;left:5px;top:8.0px;font-size:25.9px;line-height:25.9px;color:#222;font-weight:normal;letter-spacing:0px;white-space:nowrap;transform:scaleX(0.875);transform-origin:0 0">12</div></div>
<div style="position:absolute;left:287px;top:306.5px;width:53px;height:40.5px;box-sizing:border-box;background:#ffffc8;border-top:2px solid #a3a3a3;border-left:2px solid #a3a3a3;border-bottom:2px solid #ffffff;border-right:2px solid #ffffff;box-shadow:inset 2.5px 2.5px 0 #6c6c6c, inset -2px -2px 0 #e3e3e3;overflow:hidden;"><div style="position:absolute;left:5px;top:8.0px;font-size:25.9px;line-height:25.9px;color:#222;font-weight:normal;letter-spacing:0px;white-space:nowrap;transform:scaleX(0.875);transform-origin:0 0">17</div></div>
<div style="position:absolute;left:341px;top:306.5px;width:53px;height:40.5px;box-sizing:border-box;background:#ffffc8;border-top:2px solid #a3a3a3;border-left:2px solid #a3a3a3;border-bottom:2px solid #ffffff;border-right:2px solid #ffffff;box-shadow:inset 2.5px 2.5px 0 #6c6c6c, inset -2px -2px 0 #e3e3e3;overflow:hidden;"><div style="position:absolute;left:5px;top:8.0px;font-size:25.9px;line-height:25.9px;color:#222;font-weight:normal;letter-spacing:0px;white-space:nowrap;transform:scaleX(0.875);transform-origin:0 0">35</div></div>
<div style="position:absolute;left:14px;top:362.6px;font-size:21px;line-height:21px;color:#444;font-weight:normal;white-space:nowrap;font-family:'Liberation Sans', sans-serif;">X</div>
<div style="position:absolute;left:210px;top:362.6px;font-size:21px;line-height:21px;color:#444;font-weight:normal;white-space:nowrap;font-family:'Liberation Sans', sans-serif;">Y</div>
<div style="position:absolute;left:38px;top:352.5px;width:52px;height:40.5px;box-sizing:border-box;background:#ffffc8;border-top:2px solid #a3a3a3;border-left:2px solid #a3a3a3;border-bottom:2px solid #ffffff;border-right:2px solid #ffffff;box-shadow:inset 2.5px 2.5px 0 #6c6c6c, inset -2px -2px 0 #e3e3e3;overflow:hidden;"><div style="position:absolute;left:5px;top:8.0px;font-size:25.9px;line-height:25.9px;color:#222;font-weight:normal;letter-spacing:0px;white-space:nowrap;transform:scaleX(0.875);transform-origin:0 0">5</div></div>
<div style="position:absolute;left:92px;top:352.5px;width:53px;height:40.5px;box-sizing:border-box;background:#ffffc8;border-top:2px solid #a3a3a3;border-left:2px solid #a3a3a3;border-bottom:2px solid #ffffff;border-right:2px solid #ffffff;box-shadow:inset 2.5px 2.5px 0 #6c6c6c, inset -2px -2px 0 #e3e3e3;overflow:hidden;"><div style="position:absolute;left:5px;top:8.0px;font-size:25.9px;line-height:25.9px;color:#222;font-weight:normal;letter-spacing:0px;white-space:nowrap;transform:scaleX(0.875);transform-origin:0 0">16</div></div>
<div style="position:absolute;left:147px;top:352.5px;width:53px;height:40.5px;box-sizing:border-box;background:#ffffc8;border-top:2px solid #a3a3a3;border-left:2px solid #a3a3a3;border-bottom:2px solid #ffffff;border-right:2px solid #ffffff;box-shadow:inset 2.5px 2.5px 0 #6c6c6c, inset -2px -2px 0 #e3e3e3;overflow:hidden;"><div style="position:absolute;left:5px;top:8.0px;font-size:25.9px;line-height:25.9px;color:#222;font-weight:normal;letter-spacing:0px;white-space:nowrap;transform:scaleX(0.875);transform-origin:0 0">3</div></div>
<div style="position:absolute;left:232px;top:352.5px;width:53px;height:40.5px;box-sizing:border-box;background:#f0f0f0;border-top:2px solid #a3a3a3;border-left:2px solid #a3a3a3;border-bottom:2px solid #ffffff;border-right:2px solid #ffffff;box-shadow:inset 2.5px 2.5px 0 #6c6c6c, inset -2px -2px 0 #e3e3e3;overflow:hidden;"></div>
<div style="position:absolute;left:287px;top:352.5px;width:53px;height:40.5px;box-sizing:border-box;background:#f0f0f0;border-top:2px solid #a3a3a3;border-left:2px solid #a3a3a3;border-bottom:2px solid #ffffff;border-right:2px solid #ffffff;box-shadow:inset 2.5px 2.5px 0 #6c6c6c, inset -2px -2px 0 #e3e3e3;overflow:hidden;"></div>
<div style="position:absolute;left:341px;top:352.5px;width:53px;height:40.5px;box-sizing:border-box;background:#f0f0f0;border-top:2px solid #a3a3a3;border-left:2px solid #a3a3a3;border-bottom:2px solid #ffffff;border-right:2px solid #ffffff;box-shadow:inset 2.5px 2.5px 0 #6c6c6c, inset -2px -2px 0 #e3e3e3;overflow:hidden;"></div>
<div style="position:absolute;left:7px;top:403px;width:390px;height:3px;background:#3a3aff;"></div>
<div style="position:absolute;left:7px;top:412.5px;width:344px;height:40.5px;box-sizing:border-box;background:#d0d0ff;border-top:2px solid #a3a3a3;border-left:2px solid #a3a3a3;border-bottom:2px solid #ffffff;border-right:2px solid #ffffff;box-shadow:inset 2.5px 2.5px 0 #6c6c6c, inset -2px -2px 0 #e3e3e3;overflow:hidden;"><div style="position:absolute;left:5px;top:8.3px;font-size:25.5px;line-height:25.5px;color:#9a0000;font-weight:bold;letter-spacing:0px;white-space:nowrap;transform:scaleX(1);transform-origin:0 0">Star</div></div>
<div style="position:absolute;left:355px;top:414px;width:37px;height:37px;box-sizing:border-box;background:#f0f0f0;border-top:2px solid #fdfdfd;border-left:2px solid #fdfdfd;border-bottom:3px solid #6e6e6e;border-right:3px solid #6e6e6e;overflow:hidden"><div style="position:absolute;left:14px;top:6px;width:3px;height:20px;background:#111"></div></div>
<div style="position:absolute;left:12px;top:456.8px;font-size:19.5px;line-height:19.5px;color:#1a1a1a;font-weight:normal;white-space:nowrap;font-family:'Liberation Sans', sans-serif;transform:scaleX(1.05);transform-origin:0 0">Catalogue</div>
<div style="position:absolute;left:7px;top:479.5px;width:308px;height:40.5px;box-sizing:border-box;background:#d0d0ff;border-top:2px solid #a3a3a3;border-left:2px solid #a3a3a3;border-bottom:2px solid #ffffff;border-right:2px solid #ffffff;box-shadow:inset 2.5px 2.5px 0 #6c6c6c, inset -2px -2px 0 #e3e3e3;overflow:hidden;"><div style="position:absolute;left:5.5px;top:8.7px;font-size:25.0px;line-height:25.0px;color:#111;font-weight:bold;letter-spacing:0px;white-space:nowrap;transform:scaleX(1);transform-origin:0 0">UCAC4</div></div>
<div style="position:absolute;left:320px;top:482px;width:34px;height:36px;box-sizing:border-box;background:#f0f0f0;border-top:2px solid #fdfdfd;border-left:2px solid #fdfdfd;border-bottom:3px solid #6e6e6e;border-right:3px solid #6e6e6e;overflow:hidden"><svg width="34" height="34" style="position:absolute;left:0;top:0"><path d="M4 4 L12 12 M28 4 L20 12 M4 30 L12 22 M28 30 L20 22" stroke="#404040" stroke-width="3"/></svg></div>
<div style="position:absolute;left:354px;top:482px;width:38px;height:36px;box-sizing:border-box;background:#f0f0f0;border-top:2px solid #fdfdfd;border-left:2px solid #fdfdfd;border-bottom:3px solid #6e6e6e;border-right:3px solid #6e6e6e;overflow:hidden"><svg width="34" height="34" style="position:absolute;left:0;top:0"><path d="M4 4 L12 12 M28 4 L20 12 M4 30 L12 22 M28 30 L20 22" stroke="#ff3030" stroke-width="3"/></svg></div>
<div style="position:absolute;left:12px;top:524.8px;font-size:19.5px;line-height:19.5px;color:#1a1a1a;font-weight:normal;white-space:nowrap;font-family:'Liberation Sans', sans-serif;transform:scaleX(1.05);transform-origin:0 0">Designation in catalogue</div>
<div style="position:absolute;left:7px;top:546.5px;width:308px;height:41.5px;box-sizing:border-box;background:#c8d2ff;border-top:2px solid #a3a3a3;border-left:2px solid #a3a3a3;border-bottom:2px solid #ffffff;border-right:2px solid #ffffff;box-shadow:inset 2.5px 2.5px 0 #6c6c6c, inset -2px -2px 0 #e3e3e3;overflow:hidden;"><div style="position:absolute;left:5px;top:8.1px;font-size:27.0px;line-height:27.0px;color:#222;font-weight:normal;letter-spacing:0px;white-space:nowrap;transform:scaleX(0.875);transform-origin:0 0">512-003023</div></div>
<div style="position:absolute;left:320px;top:547px;width:72px;height:41px;box-sizing:border-box;background:#f0f0f0;border-top:2px solid #fdfdfd;border-left:2px solid #fdfdfd;border-bottom:3px solid #6e6e6e;border-right:3px solid #6e6e6e;overflow:hidden"><svg width="70" height="38" style="position:absolute;left:0;top:0"><path d="M20 18 Q20 6 35 6 Q50 6 50 18 L50 26 L20 26 Z" fill="#fff" stroke="#222" stroke-width="2.5"/><rect x="31" y="5" width="9" height="12" fill="#222"/><rect x="34" y="6" width="3" height="8" fill="#fff"/><path d="M22 28 H48 V36 H44 V32 H26 V36 H22 Z" fill="#222"/></svg></div>
<div style="position:absolute;left:12px;top:593.8px;font-size:19.5px;line-height:19.5px;color:#1a1a1a;font-weight:normal;white-space:nowrap;font-family:'Liberation Sans', sans-serif;transform:scaleX(1.05);transform-origin:0 0">RA (J2000)</div>
<div style="position:absolute;left:207px;top:593.8px;font-size:19.5px;line-height:19.5px;color:#1a1a1a;font-weight:normal;white-space:nowrap;font-family:'Liberation Sans', sans-serif;transform:scaleX(1.05);transform-origin:0 0">DE (J2000)</div>
<div style="position:absolute;left:7px;top:615.5px;width:193px;height:39.5px;box-sizing:border-box;background:#d0d0ff;border-top:2px solid #a3a3a3;border-left:2px solid #a3a3a3;border-bottom:2px solid #ffffff;border-right:2px solid #ffffff;box-shadow:inset 2.5px 2.5px 0 #6c6c6c, inset -2px -2px 0 #e3e3e3;overflow:hidden;"><div style="position:absolute;left:5px;top:7.1px;font-size:27.0px;line-height:27.0px;color:#222;font-weight:normal;letter-spacing:0px;white-space:nowrap;transform:scaleX(0.875);transform-origin:0 0">02h 02m 27.75s</div></div>
<div style="position:absolute;left:202px;top:615.5px;width:192px;height:39.5px;box-sizing:border-box;background:#d0d0ff;border-top:2px solid #a3a3a3;border-left:2px solid #a3a3a3;border-bottom:2px solid #ffffff;border-right:2px solid #ffffff;box-shadow:inset 2.5px 2.5px 0 #6c6c6c, inset -2px -2px 0 #e3e3e3;overflow:hidden;"><div style="position:absolute;left:5px;top:7.1px;font-size:27.0px;line-height:27.0px;color:#222;font-weight:normal;letter-spacing:0px;white-space:nowrap;transform:scaleX(0.875);transform-origin:0 0">+12° 17' 35.25''</div></div>
<div style="position:absolute;left:12px;top:660.8px;font-size:19.5px;line-height:19.5px;color:#1a1a1a;font-weight:normal;white-space:nowrap;font-family:'Liberation Sans', sans-serif;transform:scaleX(1.05);transform-origin:0 0">Azimuth</div>
<div style="position:absolute;left:207px;top:660.8px;font-size:19.5px;line-height:19.5px;color:#1a1a1a;font-weight:normal;white-space:nowrap;font-family:'Liberation Sans', sans-serif;transform:scaleX(1.05);transform-origin:0 0">Altitude</div>
<div style="position:absolute;left:7px;top:682.5px;width:158px;height:40.5px;box-sizing:border-box;background:#d4d4d0;border-top:2px solid #a3a3a3;border-left:2px solid #a3a3a3;border-bottom:2px solid #ffffff;border-right:2px solid #ffffff;box-shadow:inset 2.5px 2.5px 0 #6c6c6c, inset -2px -2px 0 #e3e3e3;overflow:hidden;"><div style="position:absolute;left:5px;top:7.1px;font-size:27.0px;line-height:27.0px;color:#a81010;font-weight:normal;letter-spacing:0px;white-space:nowrap;transform:scaleX(0.875);transform-origin:0 0">+221° 11' 13''</div></div>
<div style="position:absolute;left:167px;top:684px;width:32px;height:37px;box-sizing:border-box;background:#f0f0f0;border-top:2px solid #fdfdfd;border-left:2px solid #fdfdfd;border-bottom:3px solid #6e6e6e;border-right:3px solid #6e6e6e;overflow:hidden"><div style="position:absolute;left:12px;top:20px;width:4px;height:4px;background:#222"></div></div>
<div style="position:absolute;left:202px;top:682.5px;width:157px;height:40.5px;box-sizing:border-box;background:#d4d4d0;border-top:2px solid #a3a3a3;border-left:2px solid #a3a3a3;border-bottom:2px solid #ffffff;border-right:2px solid #ffffff;box-shadow:inset 2.5px 2.5px 0 #6c6c6c, inset -2px -2px 0 #e3e3e3;overflow:hidden;"><div style="position:absolute;left:5px;top:7.1px;font-size:27.0px;line-height:27.0px;color:#a81010;font-weight:normal;letter-spacing:0px;white-space:nowrap;transform:scaleX(0.875);transform-origin:0 0">+48° 30' 07''</div></div>
<div style="position:absolute;left:361px;top:684px;width:31px;height:37px;box-sizing:border-box;background:#f0f0f0;border-top:2px solid #fdfdfd;border-left:2px solid #fdfdfd;border-bottom:3px solid #6e6e6e;border-right:3px solid #6e6e6e;overflow:hidden"><div style="position:absolute;left:12px;top:20px;width:4px;height:4px;background:#222"></div></div>
<div style="position:absolute;left:12px;top:729.8px;font-size:19.5px;line-height:19.5px;color:#1a1a1a;font-weight:normal;white-space:nowrap;font-family:'Liberation Sans', sans-serif;transform:scaleX(1.05);transform-origin:0 0">Hour Angle</div>
<div style="position:absolute;left:207px;top:729.8px;font-size:19.5px;line-height:19.5px;color:#1a1a1a;font-weight:normal;white-space:nowrap;font-family:'Liberation Sans', sans-serif;transform:scaleX(1.05);transform-origin:0 0">Magnitude</div>
<div style="position:absolute;left:320px;top:729.8px;font-size:19.5px;line-height:19.5px;color:#999;font-weight:normal;white-space:nowrap;font-family:'Liberation Sans', sans-serif;transform:scaleX(1.05);transform-origin:0 0">S.T.</div>
<div style="position:absolute;left:7px;top:750.5px;width:193px;height:40.5px;box-sizing:border-box;background:#d4d4d0;border-top:2px solid #a3a3a3;border-left:2px solid #a3a3a3;border-bottom:2px solid #ffffff;border-right:2px solid #ffffff;box-shadow:inset 2.5px 2.5px 0 #6c6c6c, inset -2px -2px 0 #e3e3e3;overflow:hidden;"><div style="position:absolute;left:5px;top:7.1px;font-size:27.0px;line-height:27.0px;color:#a81010;font-weight:normal;letter-spacing:0px;white-space:nowrap;transform:scaleX(0.875);transform-origin:0 0">+01h 46m 06s</div></div>
<div style="position:absolute;left:202px;top:750.5px;width:113px;height:40.5px;box-sizing:border-box;background:#d0d0ff;border-top:2px solid #a3a3a3;border-left:2px solid #a3a3a3;border-bottom:2px solid #ffffff;border-right:2px solid #ffffff;box-shadow:inset 2.5px 2.5px 0 #6c6c6c, inset -2px -2px 0 #e3e3e3;overflow:hidden;"><div style="position:absolute;left:5px;top:7.1px;font-size:27.0px;line-height:27.0px;color:#222;font-weight:normal;letter-spacing:0px;white-space:nowrap;transform:scaleX(0.875);transform-origin:0 0">12.095</div></div>
<div style="position:absolute;left:316px;top:750.5px;width:78px;height:40.5px;box-sizing:border-box;background:#f0f0f0;border-top:2px solid #a3a3a3;border-left:2px solid #a3a3a3;border-bottom:2px solid #ffffff;border-right:2px solid #ffffff;box-shadow:inset 2.5px 2.5px 0 #6c6c6c, inset -2px -2px 0 #e3e3e3;overflow:hidden;"></div>
<div style="position:absolute;left:12px;top:797.8px;font-size:19.5px;line-height:19.5px;color:#1a1a1a;font-weight:normal;white-space:nowrap;font-family:'Liberation Sans', sans-serif;transform:scaleX(1.05);transform-origin:0 0">Rise (UT)</div>
<div style="position:absolute;left:142px;top:797.8px;font-size:19.5px;line-height:19.5px;color:#1a1a1a;font-weight:normal;white-space:nowrap;font-family:'Liberation Sans', sans-serif;transform:scaleX(1.05);transform-origin:0 0">Transit (UT)</div>
<div style="position:absolute;left:270px;top:797.8px;font-size:19.5px;line-height:19.5px;color:#1a1a1a;font-weight:normal;white-space:nowrap;font-family:'Liberation Sans', sans-serif;transform:scaleX(1.05);transform-origin:0 0">Set (UT)</div>
<div style="position:absolute;left:7px;top:818.5px;width:129px;height:40.5px;box-sizing:border-box;background:#d4d4d0;border-top:2px solid #a3a3a3;border-left:2px solid #a3a3a3;border-bottom:2px solid #ffffff;border-right:2px solid #ffffff;box-shadow:inset 2.5px 2.5px 0 #6c6c6c, inset -2px -2px 0 #e3e3e3;overflow:hidden;"><div style="position:absolute;left:5px;top:7.1px;font-size:27.0px;line-height:27.0px;color:#a81010;font-weight:normal;letter-spacing:0px;white-space:nowrap;transform:scaleX(0.875);transform-origin:0 0">08h54m</div></div>
<div style="position:absolute;left:136px;top:818.5px;width:128px;height:40.5px;box-sizing:border-box;background:#d4d4d0;border-top:2px solid #a3a3a3;border-left:2px solid #a3a3a3;border-bottom:2px solid #ffffff;border-right:2px solid #ffffff;box-shadow:inset 2.5px 2.5px 0 #6c6c6c, inset -2px -2px 0 #e3e3e3;overflow:hidden;"><div style="position:absolute;left:5px;top:7.1px;font-size:27.0px;line-height:27.0px;color:#a81010;font-weight:normal;letter-spacing:0px;white-space:nowrap;transform:scaleX(0.875);transform-origin:0 0">15h51m</div></div>
<div style="position:absolute;left:265px;top:818.5px;width:129px;height:40.5px;box-sizing:border-box;background:#d4d4d0;border-top:2px solid #a3a3a3;border-left:2px solid #a3a3a3;border-bottom:2px solid #ffffff;border-right:2px solid #ffffff;box-shadow:inset 2.5px 2.5px 0 #6c6c6c, inset -2px -2px 0 #e3e3e3;overflow:hidden;"><div style="position:absolute;left:5px;top:7.1px;font-size:27.0px;line-height:27.0px;color:#a81010;font-weight:normal;letter-spacing:0px;white-space:nowrap;transform:scaleX(0.875);transform-origin:0 0">22h48m</div></div>
<div style="position:absolute;left:12px;top:865.8px;font-size:19.5px;line-height:19.5px;color:#1a1a1a;font-weight:normal;white-space:nowrap;font-family:'Liberation Sans', sans-serif;transform:scaleX(1.05);transform-origin:0 0">RA Epoch</div>
<div style="position:absolute;left:207px;top:865.8px;font-size:19.5px;line-height:19.5px;color:#1a1a1a;font-weight:normal;white-space:nowrap;font-family:'Liberation Sans', sans-serif;transform:scaleX(1.05);transform-origin:0 0">DE Epoch</div>
<div style="position:absolute;left:7px;top:886.5px;width:193px;height:39.5px;box-sizing:border-box;background:#d0d0ff;border-top:2px solid #a3a3a3;border-left:2px solid #a3a3a3;border-bottom:2px solid #ffffff;border-right:2px solid #ffffff;box-shadow:inset 2.5px 2.5px 0 #6c6c6c, inset -2px -2px 0 #e3e3e3;overflow:hidden;"><div style="position:absolute;left:5px;top:7.1px;font-size:27.0px;line-height:27.0px;color:#222;font-weight:normal;letter-spacing:0px;white-space:nowrap;transform:scaleX(0.875);transform-origin:0 0">1997.22</div></div>
<div style="position:absolute;left:202px;top:886.5px;width:192px;height:39.5px;box-sizing:border-box;background:#d0d0ff;border-top:2px solid #a3a3a3;border-left:2px solid #a3a3a3;border-bottom:2px solid #ffffff;border-right:2px solid #ffffff;box-shadow:inset 2.5px 2.5px 0 #6c6c6c, inset -2px -2px 0 #e3e3e3;overflow:hidden;"><div style="position:absolute;left:5px;top:7.1px;font-size:27.0px;line-height:27.0px;color:#222;font-weight:normal;letter-spacing:0px;white-space:nowrap;transform:scaleX(0.875);transform-origin:0 0">1997.82</div></div>
<div style="position:absolute;left:12px;top:932.8px;font-size:19.5px;line-height:19.5px;color:#1a1a1a;font-weight:normal;white-space:nowrap;font-family:'Liberation Sans', sans-serif;transform:scaleX(1.05);transform-origin:0 0">B, V, g, r and i Mags</div>
<div style="position:absolute;left:207px;top:932.8px;font-size:19.5px;line-height:19.5px;color:#1a1a1a;font-weight:normal;white-space:nowrap;font-family:'Liberation Sans', sans-serif;transform:scaleX(1.05);transform-origin:0 0">J, H, Ks Mags</div>
<div style="position:absolute;left:7px;top:953.5px;width:193px;height:40.5px;box-sizing:border-box;background:#d0d0ff;border-top:2px solid #a3a3a3;border-left:2px solid #a3a3a3;border-bottom:2px solid #ffffff;border-right:2px solid #ffffff;box-shadow:inset 2.5px 2.5px 0 #6c6c6c, inset -2px -2px 0 #e3e3e3;overflow:hidden;"><div style="position:absolute;left:5px;top:7.1px;font-size:27.0px;line-height:27.0px;color:#222;font-weight:normal;letter-spacing:0px;white-space:nowrap;transform:scaleX(0.875);transform-origin:0 0">13.34 / 12.283 / </div></div>
<div style="position:absolute;left:202px;top:953.5px;width:192px;height:40.5px;box-sizing:border-box;background:#d0d0ff;border-top:2px solid #a3a3a3;border-left:2px solid #a3a3a3;border-bottom:2px solid #ffffff;border-right:2px solid #ffffff;box-shadow:inset 2.5px 2.5px 0 #6c6c6c, inset -2px -2px 0 #e3e3e3;overflow:hidden;"><div style="position:absolute;left:5px;top:7.1px;font-size:27.0px;line-height:27.0px;color:#222;font-weight:normal;letter-spacing:0px;white-space:nowrap;transform:scaleX(0.875);transform-origin:0 0">10.397 / 9.877 / </div></div>
<div style="position:absolute;left:12px;top:1000.8px;font-size:19.5px;line-height:19.5px;color:#1a1a1a;font-weight:normal;white-space:nowrap;font-family:'Liberation Sans', sans-serif;transform:scaleX(1.05);transform-origin:0 0">JHKs cc_flg/ph_flg</div>
<div style="position:absolute;left:207px;top:1000.8px;font-size:19.5px;line-height:19.5px;color:#1a1a1a;font-weight:normal;white-space:nowrap;font-family:'Liberation Sans', sans-serif;transform:scaleX(1.05);transform-origin:0 0">JHKs phot. Err.</div>
<div style="position:absolute;left:7px;top:1023.5px;width:193px;height:40.5px;box-sizing:border-box;background:#d0d0ff;border-top:2px solid #a3a3a3;border-left:2px solid #a3a3a3;border-bottom:2px solid #ffffff;border-right:2px solid #ffffff;box-shadow:inset 2.5px 2.5px 0 #6c6c6c, inset -2px -2px 0 #e3e3e3;overflow:hidden;"><div style="position:absolute;left:5px;top:7.1px;font-size:27.0px;line-height:27.0px;color:#222;font-weight:normal;letter-spacing:0px;white-space:nowrap;transform:scaleX(0.875);transform-origin:0 0">0, 0, 0 / 5, 5, 5</div></div>
<div style="position:absolute;left:202px;top:1023.5px;width:192px;height:40.5px;box-sizing:border-box;background:#d0d0ff;border-top:2px solid #a3a3a3;border-left:2px solid #a3a3a3;border-bottom:2px solid #ffffff;border-right:2px solid #ffffff;box-shadow:inset 2.5px 2.5px 0 #6c6c6c, inset -2px -2px 0 #e3e3e3;overflow:hidden;"><div style="position:absolute;left:5px;top:7.1px;font-size:27.0px;line-height:27.0px;color:#222;font-weight:normal;letter-spacing:0px;white-space:nowrap;transform:scaleX(0.875);transform-origin:0 0">0.02 / 0.02 / 0.02</div></div>
<div style="position:absolute;left:10px;top:1068.8px;font-size:19.5px;line-height:19.5px;color:#1a1a1a;font-weight:normal;white-space:nowrap;font-family:'Liberation Sans', sans-serif;transform:scaleX(1.05);transform-origin:0 0">Object Type</div>
<div style="position:absolute;left:6px;top:1091.5px;width:386px;height:41.5px;box-sizing:border-box;background:#d0d0ff;border-top:2px solid #a3a3a3;border-left:2px solid #a3a3a3;border-bottom:2px solid #ffffff;border-right:2px solid #ffffff;box-shadow:inset 2.5px 2.5px 0 #6c6c6c, inset -2px -2px 0 #e3e3e3;overflow:hidden;"><div style="position:absolute;left:5px;top:8.1px;font-size:27.0px;line-height:27.0px;color:#222;font-weight:normal;letter-spacing:0px;white-space:nowrap;transform:scaleX(0.875);transform-origin:0 0">0 - clean star</div></div>
<div style="position:absolute;left:12px;top:1135.8px;font-size:19.5px;line-height:19.5px;color:#999;font-weight:normal;white-space:nowrap;font-family:'Liberation Sans', sans-serif;transform:scaleX(1.05);transform-origin:0 0">Lumin.</div>
<div style="position:absolute;left:84px;top:1135.8px;font-size:19.5px;line-height:19.5px;color:#1a1a1a;font-weight:normal;white-space:nowrap;font-family:'Liberation Sans', sans-serif;transform:scaleX(1.05);transform-origin:0 0">Mag. Error</div>
<div style="position:absolute;left:237px;top:1135.8px;font-size:19.5px;line-height:19.5px;color:#1a1a1a;font-weight:normal;white-space:nowrap;font-family:'Liberation Sans', sans-serif;transform:scaleX(1.05);transform-origin:0 0">DST</div>
<div style="position:absolute;left:320px;top:1135.8px;font-size:19.5px;line-height:19.5px;color:#1a1a1a;font-weight:normal;white-space:nowrap;font-family:'Liberation Sans', sans-serif;transform:scaleX(1.05);transform-origin:0 0">DSF</div>
<div style="position:absolute;left:7px;top:1159.5px;width:70px;height:40.5px;box-sizing:border-box;background:#f0f0f0;border-top:2px solid #a3a3a3;border-left:2px solid #a3a3a3;border-bottom:2px solid #ffffff;border-right:2px solid #ffffff;box-shadow:inset 2.5px 2.5px 0 #6c6c6c, inset -2px -2px 0 #e3e3e3;overflow:hidden;"></div>
<div style="position:absolute;left:79px;top:1159.5px;width:149px;height:40.5px;box-sizing:border-box;background:#d0d0ff;border-top:2px solid #a3a3a3;border-left:2px solid #a3a3a3;border-bottom:2px solid #ffffff;border-right:2px solid #ffffff;box-shadow:inset 2.5px 2.5px 0 #6c6c6c, inset -2px -2px 0 #e3e3e3;overflow:hidden;"><div style="position:absolute;left:5px;top:7.1px;font-size:27.0px;line-height:27.0px;color:#222;font-weight:normal;letter-spacing:0px;white-space:nowrap;transform:scaleX(0.875);transform-origin:0 0">0.06</div></div>
<div style="position:absolute;left:231px;top:1159.5px;width:80px;height:40.5px;box-sizing:border-box;background:#d0d0ff;border-top:2px solid #a3a3a3;border-left:2px solid #a3a3a3;border-bottom:2px solid #ffffff;border-right:2px solid #ffffff;box-shadow:inset 2.5px 2.5px 0 #6c6c6c, inset -2px -2px 0 #e3e3e3;overflow:hidden;"><div style="position:absolute;left:5px;top:7.1px;font-size:27.0px;line-height:27.0px;color:#222;font-weight:normal;letter-spacing:0px;white-space:nowrap;transform:scaleX(0.875);transform-origin:0 0">0</div></div>
<div style="position:absolute;left:314px;top:1159.5px;width:77px;height:40.5px;box-sizing:border-box;background:#d0d0ff;border-top:2px solid #a3a3a3;border-left:2px solid #a3a3a3;border-bottom:2px solid #ffffff;border-right:2px solid #ffffff;box-shadow:inset 2.5px 2.5px 0 #6c6c6c, inset -2px -2px 0 #e3e3e3;overflow:hidden;"><div style="position:absolute;left:5px;top:7.1px;font-size:27.0px;line-height:27.0px;color:#222;font-weight:normal;letter-spacing:0px;white-space:nowrap;transform:scaleX(0.875);transform-origin:0 0">0</div></div>
<div style="position:absolute;left:12px;top:1203.8px;font-size:19.5px;line-height:19.5px;color:#1a1a1a;font-weight:normal;white-space:nowrap;font-family:'Liberation Sans', sans-serif;transform:scaleX(1.05);transform-origin:0 0">Fit M.</div>
<div style="position:absolute;left:85px;top:1203.8px;font-size:19.5px;line-height:19.5px;color:#1a1a1a;font-weight:normal;white-space:nowrap;font-family:'Liberation Sans', sans-serif;transform:scaleX(1.05);transform-origin:0 0">Aper.</div>
<div style="position:absolute;left:159px;top:1203.8px;font-size:19.5px;line-height:19.5px;color:#999;font-weight:normal;white-space:nowrap;font-family:'Liberation Sans', sans-serif;transform:scaleX(1.05);transform-origin:0 0">Surf.B.</div>
<div style="position:absolute;left:233px;top:1203.8px;font-size:19.5px;line-height:19.5px;color:#1a1a1a;font-weight:normal;white-space:nowrap;font-family:'Liberation Sans', sans-serif;transform:scaleX(1.05);transform-origin:0 0">RA Err.</div>
<div style="position:absolute;left:315px;top:1203.8px;font-size:19.5px;line-height:19.5px;color:#1a1a1a;font-weight:normal;white-space:nowrap;font-family:'Liberation Sans', sans-serif;transform:scaleX(1.05);transform-origin:0 0">DE Err.</div>
<div style="position:absolute;left:7px;top:1226.5px;width:70px;height:41.5px;box-sizing:border-box;background:#d0d0ff;border-top:2px solid #a3a3a3;border-left:2px solid #a3a3a3;border-bottom:2px solid #ffffff;border-right:2px solid #ffffff;box-shadow:inset 2.5px 2.5px 0 #6c6c6c, inset -2px -2px 0 #e3e3e3;overflow:hidden;"><div style="position:absolute;left:5px;top:8.1px;font-size:27.0px;line-height:27.0px;color:#222;font-weight:normal;letter-spacing:0px;white-space:nowrap;transform:scaleX(0.875);transform-origin:0 0">12.09</div></div>
<div style="position:absolute;left:79px;top:1226.5px;width:70px;height:41.5px;box-sizing:border-box;background:#d0d0ff;border-top:2px solid #a3a3a3;border-left:2px solid #a3a3a3;border-bottom:2px solid #ffffff;border-right:2px solid #ffffff;box-shadow:inset 2.5px 2.5px 0 #6c6c6c, inset -2px -2px 0 #e3e3e3;overflow:hidden;"><div style="position:absolute;left:5px;top:8.1px;font-size:27.0px;line-height:27.0px;color:#222;font-weight:normal;letter-spacing:0px;white-space:nowrap;transform:scaleX(0.875);transform-origin:0 0">12.08</div></div>
<div style="position:absolute;left:153px;top:1226.5px;width:71px;height:41.5px;box-sizing:border-box;background:#f0f0f0;border-top:2px solid #a3a3a3;border-left:2px solid #a3a3a3;border-bottom:2px solid #ffffff;border-right:2px solid #ffffff;box-shadow:inset 2.5px 2.5px 0 #6c6c6c, inset -2px -2px 0 #e3e3e3;overflow:hidden;"></div>
<div style="position:absolute;left:227px;top:1226.5px;width:79px;height:41.5px;box-sizing:border-box;background:#d0d0ff;border-top:2px solid #a3a3a3;border-left:2px solid #a3a3a3;border-bottom:2px solid #ffffff;border-right:2px solid #ffffff;box-shadow:inset 2.5px 2.5px 0 #6c6c6c, inset -2px -2px 0 #e3e3e3;overflow:hidden;"><div style="position:absolute;left:5px;top:8.1px;font-size:27.0px;line-height:27.0px;color:#222;font-weight:normal;letter-spacing:0px;white-space:nowrap;transform:scaleX(0.875);transform-origin:0 0">11</div></div>
<div style="position:absolute;left:311px;top:1226.5px;width:80px;height:41.5px;box-sizing:border-box;background:#d0d0ff;border-top:2px solid #a3a3a3;border-left:2px solid #a3a3a3;border-bottom:2px solid #ffffff;border-right:2px solid #ffffff;box-shadow:inset 2.5px 2.5px 0 #6c6c6c, inset -2px -2px 0 #e3e3e3;overflow:hidden;"><div style="position:absolute;left:5px;top:8.1px;font-size:27.0px;line-height:27.0px;color:#222;font-weight:normal;letter-spacing:0px;white-space:nowrap;transform:scaleX(0.875);transform-origin:0 0">12</div></div>
<div style="position:absolute;left:12px;top:1272.8px;font-size:19.5px;line-height:19.5px;color:#1a1a1a;font-weight:normal;white-space:nowrap;font-family:'Liberation Sans', sans-serif;transform:scaleX(1.05);transform-origin:0 0">RA pm</div>
<div style="position:absolute;left:110px;top:1272.8px;font-size:19.5px;line-height:19.5px;color:#1a1a1a;font-weight:normal;white-space:nowrap;font-family:'Liberation Sans', sans-serif;transform:scaleX(1.05);transform-origin:0 0">DE pm</div>
<div style="position:absolute;left:211px;top:1272.8px;font-size:19.5px;line-height:19.5px;color:#1a1a1a;font-weight:normal;white-space:nowrap;font-family:'Liberation Sans', sans-serif;transform:scaleX(1.05);transform-origin:0 0">Er RA pm</div>
<div style="position:absolute;left:311px;top:1272.8px;font-size:19.5px;line-height:19.5px;color:#1a1a1a;font-weight:normal;white-space:nowrap;font-family:'Liberation Sans', sans-serif;transform:scaleX(1.05);transform-origin:0 0">Er DE pm</div>
<div style="position:absolute;left:7px;top:1295.5px;width:96px;height:40.5px;box-sizing:border-box;background:#d0d0ff;border-top:2px solid #a3a3a3;border-left:2px solid #a3a3a3;border-bottom:2px solid #ffffff;border-right:2px solid #ffffff;box-shadow:inset 2.5px 2.5px 0 #6c6c6c, inset -2px -2px 0 #e3e3e3;overflow:hidden;"><div style="position:absolute;left:5px;top:7.1px;font-size:27.0px;line-height:27.0px;color:#222;font-weight:normal;letter-spacing:0px;white-space:nowrap;transform:scaleX(0.875);transform-origin:0 0">-2.4</div></div>
<div style="position:absolute;left:106px;top:1295.5px;width:95px;height:40.5px;box-sizing:border-box;background:#d0d0ff;border-top:2px solid #a3a3a3;border-left:2px solid #a3a3a3;border-bottom:2px solid #ffffff;border-right:2px solid #ffffff;box-shadow:inset 2.5px 2.5px 0 #6c6c6c, inset -2px -2px 0 #e3e3e3;overflow:hidden;"><div style="position:absolute;left:5px;top:7.1px;font-size:27.0px;line-height:27.0px;color:#222;font-weight:normal;letter-spacing:0px;white-space:nowrap;transform:scaleX(0.875);transform-origin:0 0">-12.1</div></div>
<div style="position:absolute;left:206px;top:1295.5px;width:97px;height:40.5px;box-sizing:border-box;background:#d0d0ff;border-top:2px solid #a3a3a3;border-left:2px solid #a3a3a3;border-bottom:2px solid #ffffff;border-right:2px solid #ffffff;box-shadow:inset 2.5px 2.5px 0 #6c6c6c, inset -2px -2px 0 #e3e3e3;overflow:hidden;"><div style="position:absolute;left:5px;top:7.1px;font-size:27.0px;line-height:27.0px;color:#222;font-weight:normal;letter-spacing:0px;white-space:nowrap;transform:scaleX(0.875);transform-origin:0 0">1</div></div>
<div style="position:absolute;left:306px;top:1295.5px;width:88px;height:40.5px;box-sizing:border-box;background:#d0d0ff;border-top:2px solid #a3a3a3;border-left:2px solid #a3a3a3;border-bottom:2px solid #ffffff;border-right:2px solid #ffffff;box-shadow:inset 2.5px 2.5px 0 #6c6c6c, inset -2px -2px 0 #e3e3e3;overflow:hidden;"><div style="position:absolute;left:5px;top:7.1px;font-size:27.0px;line-height:27.0px;color:#222;font-weight:normal;letter-spacing:0px;white-space:nowrap;transform:scaleX(0.875);transform-origin:0 0">1.2</div></div>
<div style="position:absolute;left:12px;top:1340.8px;font-size:19.5px;line-height:19.5px;color:#1a1a1a;font-weight:normal;white-space:nowrap;font-family:'Liberation Sans', sans-serif;transform:scaleX(1.05);transform-origin:0 0">Other Information</div>
<div style="position:absolute;left:8px;top:1364px;width:385px;height:156px;box-sizing:border-box;background:#f0f0f0;border-top:3px solid #8a8a8a;border-left:3px solid #8a8a8a;border-bottom:2px solid #fcfcfc;border-right:2px solid #fcfcfc;overflow:hidden"><div style="position:absolute;left:0;top:0;width:344px;height:151px;background:#d0d0ff"></div><div style="position:absolute;left:344px;top:0;width:38px;height:151px;background:#f0f0f0"></div><svg style="position:absolute;left:353px;top:16px" width="22" height="16"><path d="M3 12 L11 4 L19 12" fill="none" stroke="#555" stroke-width="3"/></svg><div style="position:absolute;left:348px;top:40px;width:32px;height:36px;background:#cdcdcd"></div><svg style="position:absolute;left:353px;top:128px" width="22" height="16"><path d="M3 4 L11 12 L19 4" fill="none" stroke="#555" stroke-width="3"/></svg></div>
<div style="position:absolute;left:14px;top:1374.8px;font-size:19.5px;line-height:19.5px;color:#222;font-weight:normal;white-space:nowrap;font-family:'Liberation Sans', sans-serif;transform:scaleX(1.04);transform-origin:0 0">RA (eq. date):&nbsp; 02h 03m 42.31s</div>
<div style="position:absolute;left:14px;top:1398.5px;font-size:19.5px;line-height:19.5px;color:#222;font-weight:normal;white-space:nowrap;font-family:'Liberation Sans', sans-serif;transform:scaleX(1.04);transform-origin:0 0">DE (eq. date):&nbsp; +12° 24' 13.42''</div>
<div style="position:absolute;left:14px;top:1422.2px;font-size:19.5px;line-height:19.5px;color:#222;font-weight:normal;white-space:nowrap;font-family:'Liberation Sans', sans-serif;transform:scaleX(1.04);transform-origin:0 0">Double Star Flag: <i>single star</i></div>
<div style="position:absolute;left:14px;top:1445.9px;font-size:19.5px;line-height:19.5px;color:#222;font-weight:normal;white-space:nowrap;font-family:'Liberation Sans', sans-serif;transform:scaleX(1.04);transform-origin:0 0">Double Star Type: No double star</div>
<div style="position:absolute;left:14px;top:1469.6px;font-size:19.5px;line-height:19.5px;color:#222;font-weight:normal;white-space:nowrap;font-family:'Liberation Sans', sans-serif;transform:scaleX(1.04);transform-origin:0 0">Total # of CCD images: 6</div>
<div style="position:absolute;left:14px;top:1493.3px;font-size:19.5px;line-height:19.5px;color:#222;font-weight:normal;white-space:nowrap;font-family:'Liberation Sans', sans-serif;transform:scaleX(1.04);transform-origin:0 0"># of CCD images used: 5</div>
<div style="position:absolute;left:6px;top:1702px;width:2652px;height:18px;background:#f0f0f0;"></div>
<div style="position:absolute;left:7px;top:1709.5px;width:387px;height:32.5px;box-sizing:border-box;background:#f0f0f0;border-top:2px solid #a3a3a3;border-left:2px solid #a3a3a3;border-bottom:2px solid #ffffff;border-right:2px solid #ffffff;box-shadow:inset 2.5px 2.5px 0 #6c6c6c, inset -2px -2px 0 #e3e3e3;overflow:hidden;"></div>
<div style="position:absolute;left:402px;top:1713.4px;font-size:20px;line-height:20px;color:#111;font-weight:bold;white-space:nowrap;font-family:'Liberation Sans', sans-serif;">RA:</div>
<div style="position:absolute;left:443px;top:1709.5px;width:41px;height:32.5px;box-sizing:border-box;background:#f0f0f0;border-top:2px solid #a3a3a3;border-left:2px solid #a3a3a3;border-bottom:2px solid #ffffff;border-right:2px solid #ffffff;box-shadow:inset 2.5px 2.5px 0 #6c6c6c, inset -2px -2px 0 #e3e3e3;overflow:hidden;"><div style="position:absolute;left:5px;top:2.9px;font-size:20.0px;line-height:20.0px;color:#c03030;font-weight:normal;letter-spacing:0px;white-space:nowrap;transform:scaleX(1);transform-origin:0 0">02</div></div>
<div style="position:absolute;left:486px;top:1709.5px;width:40px;height:32.5px;box-sizing:border-box;background:#f0f0f0;border-top:2px solid #a3a3a3;border-left:2px solid #a3a3a3;border-bottom:2px solid #ffffff;border-right:2px solid #ffffff;box-shadow:inset 2.5px 2.5px 0 #6c6c6c, inset -2px -2px 0 #e3e3e3;overflow:hidden;"><div style="position:absolute;left:5px;top:2.9px;font-size:20.0px;line-height:20.0px;color:#c03030;font-weight:normal;letter-spacing:0px;white-space:nowrap;transform:scaleX(1);transform-origin:0 0">02</div></div>
<div style="position:absolute;left:528px;top:1709.5px;width:39px;height:32.5px;box-sizing:border-box;background:#f0f0f0;border-top:2px solid #a3a3a3;border-left:2px solid #a3a3a3;border-bottom:2px solid #ffffff;border-right:2px solid #ffffff;box-shadow:inset 2.5px 2.5px 0 #6c6c6c, inset -2px -2px 0 #e3e3e3;overflow:hidden;"><div style="position:absolute;left:5px;top:2.9px;font-size:20.0px;line-height:20.0px;color:#c03030;font-weight:normal;letter-spacing:0px;white-space:nowrap;transform:scaleX(1);transform-origin:0 0">28</div></div>
<div style="position:absolute;left:621px;top:1709.5px;width:51px;height:32.5px;box-sizing:border-box;background:#f0f0f0;border-top:2px solid #a3a3a3;border-left:2px solid #a3a3a3;border-bottom:2px solid #ffffff;border-right:2px solid #ffffff;box-shadow:inset 2.5px 2.5px 0 #6c6c6c, inset -2px -2px 0 #e3e3e3;overflow:hidden;"><div style="position:absolute;left:5px;top:2.9px;font-size:20.0px;line-height:20.0px;color:#c03030;font-weight:normal;letter-spacing:0px;white-space:nowrap;transform:scaleX(1);transform-origin:0 0">+12</div></div>
<div style="position:absolute;left:674px;top:1709.5px;width:41px;height:32.5px;box-sizing:border-box;background:#f0f0f0;border-top:2px solid #a3a3a3;border-left:2px solid #a3a3a3;border-bottom:2px solid #ffffff;border-right:2px solid #ffffff;box-shadow:inset 2.5px 2.5px 0 #6c6c6c, inset -2px -2px 0 #e3e3e3;overflow:hidden;"><div style="position:absolute;left:5px;top:2.9px;font-size:20.0px;line-height:20.0px;color:#c03030;font-weight:normal;letter-spacing:0px;white-space:nowrap;transform:scaleX(1);transform-origin:0 0">17</div></div>
<div style="position:absolute;left:718px;top:1709.5px;width:37px;height:32.5px;box-sizing:border-box;background:#f0f0f0;border-top:2px solid #a3a3a3;border-left:2px solid #a3a3a3;border-bottom:2px solid #ffffff;border-right:2px solid #ffffff;box-shadow:inset 2.5px 2.5px 0 #6c6c6c, inset -2px -2px 0 #e3e3e3;overflow:hidden;"><div style="position:absolute;left:5px;top:2.9px;font-size:20.0px;line-height:20.0px;color:#c03030;font-weight:normal;letter-spacing:0px;white-space:nowrap;transform:scaleX(1);transform-origin:0 0">35</div></div>
<div style="position:absolute;left:822px;top:1709.5px;width:51px;height:32.5px;box-sizing:border-box;background:#f0f0f0;border-top:2px solid #a3a3a3;border-left:2px solid #a3a3a3;border-bottom:2px solid #ffffff;border-right:2px solid #ffffff;box-shadow:inset 2.5px 2.5px 0 #6c6c6c, inset -2px -2px 0 #e3e3e3;overflow:hidden;"><div style="position:absolute;left:5px;top:2.9px;font-size:20.0px;line-height:20.0px;color:#c03030;font-weight:normal;letter-spacing:0px;white-space:nowrap;transform:scaleX(1);transform-origin:0 0">01</div></div>
<div style="position:absolute;left:876px;top:1709.5px;width:38px;height:32.5px;box-sizing:border-box;background:#f0f0f0;border-top:2px solid #a3a3a3;border-left:2px solid #a3a3a3;border-bottom:2px solid #ffffff;border-right:2px solid #ffffff;box-shadow:inset 2.5px 2.5px 0 #6c6c6c, inset -2px -2px 0 #e3e3e3;overflow:hidden;"><div style="position:absolute;left:5px;top:2.9px;font-size:20.0px;line-height:20.0px;color:#c03030;font-weight:normal;letter-spacing:0px;white-space:nowrap;transform:scaleX(1);transform-origin:0 0">50</div></div>
<div style="position:absolute;left:916px;top:1709.5px;width:40px;height:32.5px;box-sizing:border-box;background:#f0f0f0;border-top:2px solid #a3a3a3;border-left:2px solid #a3a3a3;border-bottom:2px solid #ffffff;border-right:2px solid #ffffff;box-shadow:inset 2.5px 2.5px 0 #6c6c6c, inset -2px -2px 0 #e3e3e3;overflow:hidden;"><div style="position:absolute;left:5px;top:2.9px;font-size:20.0px;line-height:20.0px;color:#c03030;font-weight:normal;letter-spacing:0px;white-space:nowrap;transform:scaleX(1);transform-origin:0 0">00</div></div>
<div style="position:absolute;left:1328px;top:1709.5px;width:53px;height:32.5px;box-sizing:border-box;background:#f0f0f0;border-top:2px solid #a3a3a3;border-left:2px solid #a3a3a3;border-bottom:2px solid #ffffff;border-right:2px solid #ffffff;box-shadow:inset 2.5px 2.5px 0 #6c6c6c, inset -2px -2px 0 #e3e3e3;overflow:hidden;"></div>
<div style="position:absolute;left:1395px;top:1709.5px;width:53px;height:32.5px;box-sizing:border-box;background:#f0f0f0;border-top:2px solid #a3a3a3;border-left:2px solid #a3a3a3;border-bottom:2px solid #ffffff;border-right:2px solid #ffffff;box-shadow:inset 2.5px 2.5px 0 #6c6c6c, inset -2px -2px 0 #e3e3e3;overflow:hidden;"></div>
<div style="position:absolute;left:578px;top:1713.4px;font-size:20px;line-height:20px;color:#111;font-weight:bold;white-space:nowrap;font-family:'Liberation Sans', sans-serif;">DE:</div>
<div style="position:absolute;left:764px;top:1713.4px;font-size:20px;line-height:20px;color:#111;font-weight:bold;white-space:nowrap;font-family:'Liberation Sans', sans-serif;">Field:</div>
<div style="position:absolute;left:970px;top:1713px;width:24px;height:27px;background:#20c020;border-radius:50%;"></div>
<div style="position:absolute;left:999px;top:1713px;width:24px;height:27px;background:#20c020;border-radius:50%;"></div>
<div style="position:absolute;left:1035px;top:1708px;width:227px;height:32px;background:#ff1010;"></div>
<div style="position:absolute;left:1040px;top:1712.6px;font-size:21px;line-height:21px;color:#ffff00;font-weight:bold;white-space:nowrap;font-family:'Liberation Sans', sans-serif;">02/14/2023 17:36:44</div>
<div style="position:absolute;left:1283px;top:1711px;width:24px;height:29px;background:#0010a0;border-radius:50%;"></div>
<div style="position:absolute;left:1472px;top:1711px;width:40px;height:29px;background:#a0e0a0;border-top:3px solid #8a8a8a;box-sizing:border-box"></div>
<div style="position:absolute;left:1514px;top:1711px;width:39px;height:29px;background:#a0e0a0;border-top:3px solid #8a8a8a;box-sizing:border-box"></div>
<div style="position:absolute;left:1556px;top:1708px;width:181px;height:32px;background:#e4e4e4;"></div>
<div style="position:absolute;left:1562px;top:1713.4px;font-size:20px;line-height:20px;color:#a01010;font-weight:normal;white-space:nowrap;font-family:'Liberation Sans', sans-serif;">JD: 2459990.23284</div>
<div style="position:absolute;left:2398px;top:1709.5px;width:261px;height:32.5px;box-sizing:border-box;background:#f0f0f0;border-top:2px solid #a3a3a3;border-left:2px solid #a3a3a3;border-bottom:2px solid #ffffff;border-right:2px solid #ffffff;box-shadow:inset 2.5px 2.5px 0 #6c6c6c, inset -2px -2px 0 #e3e3e3;overflow:hidden;"></div>
<svg style="position:absolute;left:403px;top:217px" width="2255" height="1485" viewBox="403 217 2255 1485">
<rect x="403" y="217" width="2255" height="1485" fill="#000"/>
<defs><clipPath id="mc"><rect x="412" y="223" width="2240" height="1476"/></clipPath></defs>
<g stroke="#646464" stroke-width="2.2" fill="none">
<line x1="598" y1="223" x2="598" y2="1699"/>
<line x1="967" y1="223" x2="967" y2="1699"/>
<line x1="1336" y1="223" x2="1336" y2="1699"/>
<line x1="1704" y1="223" x2="1704" y2="1699"/>
<line x1="2072" y1="223" x2="2072" y2="1699"/>
<line x1="2441" y1="223" x2="2441" y2="1699"/>
<line x1="412" y1="268.5" x2="2652" y2="268.5"/>
<line x1="412" y1="520" x2="2652" y2="520"/>
<line x1="412" y1="771" x2="2652" y2="771"/>
<line x1="412" y1="1022.5" x2="2652" y2="1022.5"/>
<line x1="412" y1="1274" x2="2652" y2="1274"/>
<line x1="412" y1="1525" x2="2652" y2="1525"/>
</g>
<g clip-path="url(#mc)">
<rect x="538.7" y="322.1" width="2.6" height="2.6" fill="#cccc00"/>
<rect x="693.7" y="309.2" width="2.6" height="2.6" fill="#cccc00"/>
<rect x="844.7" y="261.1" width="2.6" height="2.6" fill="#cccc00"/>
<rect x="772.4" y="267.7" width="2.6" height="2.6" fill="#cccc00"/>
<rect x="1080.7" y="254.3" width="2.6" height="2.6" fill="#cccc00"/>
<rect x="978.2" y="284.7" width="2.6" height="2.6" fill="#cccc00"/>
<rect x="1095.7" y="293.7" width="2.6" height="2.6" fill="#cccc00"/>
<rect x="1128.7" y="313.4" width="2.6" height="2.6" fill="#cccc00"/>
<rect x="903.7" y="324.1" width="2.6" height="2.6" fill="#cccc00"/>
<rect x="1012.7" y="339.7" width="2.6" height="2.6" fill="#cccc00"/>
<rect x="466.2" y="353.0" width="2.6" height="2.6" fill="#cccc00"/>
<rect x="652.3" y="363.7" width="2.6" height="2.6" fill="#cccc00"/>
<rect x="672.1" y="374.7" width="2.6" height="2.6" fill="#cccc00"/>
<rect x="966.7" y="353.0" width="2.6" height="2.6" fill="#cccc00"/>
<rect x="1001.7" y="377.0" width="2.6" height="2.6" fill="#cccc00"/>
<rect x="463.7" y="396.5" width="2.6" height="2.6" fill="#cccc00"/>
<rect x="507.7" y="405.3" width="2.6" height="2.6" fill="#cccc00"/>
<rect x="523.4" y="416.3" width="2.6" height="2.6" fill="#cccc00"/>
<rect x="641.2" y="414.0" width="2.6" height="2.6" fill="#cccc00"/>
<rect x="739.7" y="407.5" width="2.6" height="2.6" fill="#cccc00"/>
<rect x="831.7" y="409.5" width="2.6" height="2.6" fill="#cccc00"/>
<rect x="943.2" y="425.1" width="2.6" height="2.6" fill="#cccc00"/>
<rect x="991.2" y="405.3" width="2.6" height="2.6" fill="#cccc00"/>
<rect x="1060.7" y="427.3" width="2.6" height="2.6" fill="#cccc00"/>
<rect x="1032.7" y="433.7" width="2.6" height="2.6" fill="#cccc00"/>
<rect x="1142.2" y="407.5" width="2.6" height="2.6" fill="#cccc00"/>
<rect x="455.5" y="440.3" width="2.6" height="2.6" fill="#cccc00"/>
<rect x="545.1" y="436.1" width="2.6" height="2.6" fill="#cccc00"/>
<rect x="966.7" y="457.7" width="2.6" height="2.6" fill="#cccc00"/>
<rect x="1098.4" y="475.1" width="2.6" height="2.6" fill="#cccc00"/>
<rect x="534.1" y="510.1" width="2.6" height="2.6" fill="#cccc00"/>
<rect x="698.4" y="521.2" width="2.6" height="2.6" fill="#cccc00"/>
<rect x="794.5" y="512.4" width="2.6" height="2.6" fill="#cccc00"/>
<rect x="923.4" y="536.4" width="2.6" height="2.6" fill="#cccc00"/>
<rect x="925.7" y="549.7" width="2.6" height="2.6" fill="#cccc00"/>
<rect x="820.7" y="545.2" width="2.6" height="2.6" fill="#cccc00"/>
<rect x="1080.7" y="534.2" width="2.6" height="2.6" fill="#cccc00"/>
<rect x="1146.7" y="525.4" width="2.6" height="2.6" fill="#cccc00"/>
<rect x="540.6" y="541.0" width="2.6" height="2.6" fill="#cccc00"/>
<rect x="619.5" y="541.0" width="2.6" height="2.6" fill="#cccc00"/>
<rect x="617.2" y="552.0" width="2.6" height="2.6" fill="#cccc00"/>
<rect x="621.4" y="562.7" width="2.6" height="2.6" fill="#cccc00"/>
<rect x="709.1" y="569.2" width="2.6" height="2.6" fill="#cccc00"/>
<rect x="571.1" y="591.3" width="2.6" height="2.6" fill="#cccc00"/>
<rect x="606.2" y="602.3" width="2.6" height="2.6" fill="#cccc00"/>
<rect x="420.5" y="611.1" width="2.6" height="2.6" fill="#cccc00"/>
<rect x="551.7" y="621.7" width="2.6" height="2.6" fill="#cccc00"/>
<rect x="547.1" y="632.7" width="2.6" height="2.6" fill="#cccc00"/>
<rect x="739.7" y="619.5" width="2.6" height="2.6" fill="#cccc00"/>
<rect x="1021.7" y="604.3" width="2.6" height="2.6" fill="#cccc00"/>
<rect x="973.4" y="626.4" width="2.6" height="2.6" fill="#cccc00"/>
<rect x="947.4" y="656.9" width="2.6" height="2.6" fill="#cccc00"/>
<rect x="1139.7" y="672.5" width="2.6" height="2.6" fill="#cccc00"/>
<rect x="428.7" y="681.2" width="2.6" height="2.6" fill="#cccc00"/>
<rect x="614.7" y="696.5" width="2.6" height="2.6" fill="#cccc00"/>
<rect x="846.7" y="712.7" width="2.6" height="2.6" fill="#cccc00"/>
<rect x="1308.4" y="228.0" width="2.6" height="2.6" fill="#cccc00"/>
<rect x="1201.3" y="234.5" width="2.6" height="2.6" fill="#cccc00"/>
<rect x="1194.7" y="241.7" width="2.6" height="2.6" fill="#cccc00"/>
<rect x="1605.7" y="232.7" width="2.6" height="2.6" fill="#cccc00"/>
<rect x="1708.4" y="234.5" width="2.6" height="2.6" fill="#cccc00"/>
<rect x="1623.4" y="261.1" width="2.6" height="2.6" fill="#cccc00"/>
<rect x="1780.7" y="258.7" width="2.6" height="2.6" fill="#cccc00"/>
<rect x="1201.3" y="284.7" width="2.6" height="2.6" fill="#cccc00"/>
<rect x="1476.7" y="291.7" width="2.6" height="2.6" fill="#cccc00"/>
<rect x="1546.7" y="295.7" width="2.6" height="2.6" fill="#cccc00"/>
<rect x="1571.1" y="302.7" width="2.6" height="2.6" fill="#cccc00"/>
<rect x="1620.7" y="295.7" width="2.6" height="2.6" fill="#cccc00"/>
<rect x="1708.4" y="289.3" width="2.6" height="2.6" fill="#cccc00"/>
<rect x="1789.7" y="302.7" width="2.6" height="2.6" fill="#cccc00"/>
<rect x="1820.1" y="309.2" width="2.6" height="2.6" fill="#cccc00"/>
<rect x="1340.7" y="335.5" width="2.6" height="2.6" fill="#cccc00"/>
<rect x="1695.5" y="324.4" width="2.6" height="2.6" fill="#cccc00"/>
<rect x="1715.3" y="326.7" width="2.6" height="2.6" fill="#cccc00"/>
<rect x="1842.2" y="364.0" width="2.6" height="2.6" fill="#cccc00"/>
<rect x="1188.3" y="372.7" width="2.6" height="2.6" fill="#cccc00"/>
<rect x="1319.5" y="372.7" width="2.6" height="2.6" fill="#cccc00"/>
<rect x="1479.2" y="372.7" width="2.6" height="2.6" fill="#cccc00"/>
<rect x="1155.5" y="388.1" width="2.6" height="2.6" fill="#cccc00"/>
<rect x="1325.7" y="396.5" width="2.6" height="2.6" fill="#cccc00"/>
<rect x="1529.5" y="407.5" width="2.6" height="2.6" fill="#cccc00"/>
<rect x="1536.0" y="414.0" width="2.6" height="2.6" fill="#cccc00"/>
<rect x="1590.7" y="427.0" width="2.6" height="2.6" fill="#cccc00"/>
<rect x="1734.4" y="433.7" width="2.6" height="2.6" fill="#cccc00"/>
<rect x="1229.5" y="438.1" width="2.6" height="2.6" fill="#cccc00"/>
<rect x="1290.9" y="444.5" width="2.6" height="2.6" fill="#cccc00"/>
<rect x="1369.7" y="444.5" width="2.6" height="2.6" fill="#cccc00"/>
<rect x="1483.4" y="451.4" width="2.6" height="2.6" fill="#cccc00"/>
<rect x="1391.6" y="462.1" width="2.6" height="2.6" fill="#cccc00"/>
<rect x="1573.1" y="468.9" width="2.6" height="2.6" fill="#cccc00"/>
<rect x="1845.5" y="462.1" width="2.6" height="2.6" fill="#cccc00"/>
<rect x="1157.1" y="484.2" width="2.6" height="2.6" fill="#cccc00"/>
<rect x="1347.7" y="499.4" width="2.6" height="2.6" fill="#cccc00"/>
<rect x="1162.0" y="503.7" width="2.6" height="2.6" fill="#cccc00"/>
<rect x="1798.4" y="492.9" width="2.6" height="2.6" fill="#cccc00"/>
<rect x="1293.5" y="512.4" width="2.6" height="2.6" fill="#cccc00"/>
<rect x="1741.6" y="514.7" width="2.6" height="2.6" fill="#cccc00"/>
<rect x="1787.0" y="514.7" width="2.6" height="2.6" fill="#cccc00"/>
<rect x="1148.4" y="525.4" width="2.6" height="2.6" fill="#cccc00"/>
<rect x="1411.0" y="525.4" width="2.6" height="2.6" fill="#cccc00"/>
<rect x="1732.7" y="532.2" width="2.6" height="2.6" fill="#cccc00"/>
<rect x="1811.3" y="536.7" width="2.6" height="2.6" fill="#cccc00"/>
<rect x="1828.7" y="532.2" width="2.6" height="2.6" fill="#cccc00"/>
<rect x="1330.2" y="547.5" width="2.6" height="2.6" fill="#cccc00"/>
<rect x="1771.7" y="554.3" width="2.6" height="2.6" fill="#cccc00"/>
<rect x="1822.4" y="554.3" width="2.6" height="2.6" fill="#cccc00"/>
<rect x="1162.0" y="566.9" width="2.6" height="2.6" fill="#cccc00"/>
<rect x="1354.5" y="566.9" width="2.6" height="2.6" fill="#cccc00"/>
<rect x="1538.3" y="566.9" width="2.6" height="2.6" fill="#cccc00"/>
<rect x="1437.3" y="578.0" width="2.6" height="2.6" fill="#cccc00"/>
<rect x="1629.7" y="578.0" width="2.6" height="2.6" fill="#cccc00"/>
<rect x="1581.7" y="591.3" width="2.6" height="2.6" fill="#cccc00"/>
<rect x="1481.2" y="597.7" width="2.6" height="2.6" fill="#cccc00"/>
<rect x="1730.5" y="606.6" width="2.6" height="2.6" fill="#cccc00"/>
<rect x="1765.7" y="615.3" width="2.6" height="2.6" fill="#cccc00"/>
<rect x="1658.1" y="617.7" width="2.6" height="2.6" fill="#cccc00"/>
<rect x="1251.7" y="619.7" width="2.6" height="2.6" fill="#cccc00"/>
<rect x="1288.7" y="635.1" width="2.6" height="2.6" fill="#cccc00"/>
<rect x="1317.2" y="635.1" width="2.6" height="2.6" fill="#cccc00"/>
<rect x="1509.4" y="639.0" width="2.6" height="2.6" fill="#cccc00"/>
<rect x="1638.7" y="650.4" width="2.6" height="2.6" fill="#cccc00"/>
<rect x="1655.7" y="654.7" width="2.6" height="2.6" fill="#cccc00"/>
<rect x="1715.3" y="652.7" width="2.6" height="2.6" fill="#cccc00"/>
<rect x="1139.7" y="672.1" width="2.6" height="2.6" fill="#cccc00"/>
<rect x="1500.7" y="674.1" width="2.6" height="2.6" fill="#cccc00"/>
<rect x="1396.1" y="687.7" width="2.6" height="2.6" fill="#cccc00"/>
<rect x="1505.2" y="698.4" width="2.6" height="2.6" fill="#cccc00"/>
<rect x="1881.7" y="230.3" width="2.6" height="2.6" fill="#cccc00"/>
<rect x="1966.7" y="258.7" width="2.6" height="2.6" fill="#cccc00"/>
<rect x="1929.2" y="269.6" width="2.6" height="2.6" fill="#cccc00"/>
<rect x="2213.7" y="252.3" width="2.6" height="2.6" fill="#cccc00"/>
<rect x="2204.7" y="260.9" width="2.6" height="2.6" fill="#cccc00"/>
<rect x="2360.3" y="256.7" width="2.6" height="2.6" fill="#cccc00"/>
<rect x="2602.7" y="263.1" width="2.6" height="2.6" fill="#cccc00"/>
<rect x="1819.7" y="309.2" width="2.6" height="2.6" fill="#cccc00"/>
<rect x="2246.7" y="285.1" width="2.6" height="2.6" fill="#cccc00"/>
<rect x="2259.7" y="304.9" width="2.6" height="2.6" fill="#cccc00"/>
<rect x="2382.3" y="295.9" width="2.6" height="2.6" fill="#cccc00"/>
<rect x="2437.1" y="302.4" width="2.6" height="2.6" fill="#cccc00"/>
<rect x="2544.2" y="295.9" width="2.6" height="2.6" fill="#cccc00"/>
<rect x="1841.7" y="363.7" width="2.6" height="2.6" fill="#cccc00"/>
<rect x="2003.7" y="381.3" width="2.6" height="2.6" fill="#cccc00"/>
<rect x="1894.2" y="396.5" width="2.6" height="2.6" fill="#cccc00"/>
<rect x="1918.4" y="396.5" width="2.6" height="2.6" fill="#cccc00"/>
<rect x="2351.7" y="355.0" width="2.6" height="2.6" fill="#cccc00"/>
<rect x="2308.1" y="365.7" width="2.6" height="2.6" fill="#cccc00"/>
<rect x="2346.7" y="394.3" width="2.6" height="2.6" fill="#cccc00"/>
<rect x="2640.4" y="365.7" width="2.6" height="2.6" fill="#cccc00"/>
<rect x="2194.2" y="407.3" width="2.6" height="2.6" fill="#cccc00"/>
<rect x="2298.7" y="413.7" width="2.6" height="2.6" fill="#cccc00"/>
<rect x="2298.7" y="418.5" width="2.6" height="2.6" fill="#cccc00"/>
<rect x="2629.3" y="405.1" width="2.6" height="2.6" fill="#cccc00"/>
<rect x="2638.3" y="405.1" width="2.6" height="2.6" fill="#cccc00"/>
<rect x="2541.7" y="427.1" width="2.6" height="2.6" fill="#cccc00"/>
<rect x="2322.7" y="434.0" width="2.6" height="2.6" fill="#cccc00"/>
<rect x="2320.7" y="444.4" width="2.6" height="2.6" fill="#cccc00"/>
<rect x="2287.7" y="449.1" width="2.6" height="2.6" fill="#cccc00"/>
<rect x="2526.2" y="457.7" width="2.6" height="2.6" fill="#cccc00"/>
<rect x="1846.7" y="461.7" width="2.6" height="2.6" fill="#cccc00"/>
<rect x="1984.3" y="460.3" width="2.6" height="2.6" fill="#cccc00"/>
<rect x="2176.5" y="466.4" width="2.6" height="2.6" fill="#cccc00"/>
<rect x="2178.7" y="470.7" width="2.6" height="2.6" fill="#cccc00"/>
<rect x="2253.3" y="472.9" width="2.6" height="2.6" fill="#cccc00"/>
<rect x="2303.4" y="466.4" width="2.6" height="2.6" fill="#cccc00"/>
<rect x="1907.7" y="477.6" width="2.6" height="2.6" fill="#cccc00"/>
<rect x="1881.7" y="503.9" width="2.6" height="2.6" fill="#cccc00"/>
<rect x="2027.7" y="523.0" width="2.6" height="2.6" fill="#cccc00"/>
<rect x="2030.1" y="527.7" width="2.6" height="2.6" fill="#cccc00"/>
<rect x="2047.4" y="519.0" width="2.6" height="2.6" fill="#cccc00"/>
<rect x="2294.7" y="519.0" width="2.6" height="2.6" fill="#cccc00"/>
<rect x="2434.2" y="519.0" width="2.6" height="2.6" fill="#cccc00"/>
<rect x="1811.3" y="536.3" width="2.6" height="2.6" fill="#cccc00"/>
<rect x="1828.7" y="532.0" width="2.6" height="2.6" fill="#cccc00"/>
<rect x="1942.5" y="536.3" width="2.6" height="2.6" fill="#cccc00"/>
<rect x="1822.1" y="554.0" width="2.6" height="2.6" fill="#cccc00"/>
<rect x="2509.2" y="538.5" width="2.6" height="2.6" fill="#cccc00"/>
<rect x="2528.7" y="534.2" width="2.6" height="2.6" fill="#cccc00"/>
<rect x="2546.4" y="532.0" width="2.6" height="2.6" fill="#cccc00"/>
<rect x="2616.3" y="542.7" width="2.6" height="2.6" fill="#cccc00"/>
<rect x="2189.5" y="547.5" width="2.6" height="2.6" fill="#cccc00"/>
<rect x="2202.7" y="562.7" width="2.6" height="2.6" fill="#cccc00"/>
<rect x="2176.5" y="569.1" width="2.6" height="2.6" fill="#cccc00"/>
<rect x="1964.2" y="577.7" width="2.6" height="2.6" fill="#cccc00"/>
<rect x="1984.3" y="573.5" width="2.6" height="2.6" fill="#cccc00"/>
<rect x="1982.2" y="580.0" width="2.6" height="2.6" fill="#cccc00"/>
<rect x="2204.7" y="589.0" width="2.6" height="2.6" fill="#cccc00"/>
<rect x="2388.7" y="575.7" width="2.6" height="2.6" fill="#cccc00"/>
<rect x="2502.4" y="584.3" width="2.6" height="2.6" fill="#cccc00"/>
<rect x="2544.2" y="586.5" width="2.6" height="2.6" fill="#cccc00"/>
<rect x="2557.2" y="601.9" width="2.6" height="2.6" fill="#cccc00"/>
<rect x="1898.7" y="604.1" width="2.6" height="2.6" fill="#cccc00"/>
<rect x="1999.5" y="612.7" width="2.6" height="2.6" fill="#cccc00"/>
<rect x="2106.6" y="641.2" width="2.6" height="2.6" fill="#cccc00"/>
<rect x="2410.4" y="636.9" width="2.6" height="2.6" fill="#cccc00"/>
<rect x="2530.7" y="634.7" width="2.6" height="2.6" fill="#cccc00"/>
<rect x="2075.9" y="667.6" width="2.6" height="2.6" fill="#cccc00"/>
<rect x="2187.7" y="667.6" width="2.6" height="2.6" fill="#cccc00"/>
<rect x="2279.2" y="669.7" width="2.6" height="2.6" fill="#cccc00"/>
<rect x="1859.3" y="678.4" width="2.6" height="2.6" fill="#cccc00"/>
<rect x="1924.7" y="680.5" width="2.6" height="2.6" fill="#cccc00"/>
<rect x="2298.7" y="689.5" width="2.6" height="2.6" fill="#cccc00"/>
<rect x="2607.7" y="684.9" width="2.6" height="2.6" fill="#cccc00"/>
<rect x="2616.3" y="695.7" width="2.6" height="2.6" fill="#cccc00"/>
<rect x="2646.7" y="691.3" width="2.6" height="2.6" fill="#cccc00"/>
<rect x="2535.2" y="695.7" width="2.6" height="2.6" fill="#cccc00"/>
<rect x="2147.7" y="711.2" width="2.6" height="2.6" fill="#cccc00"/>
<rect x="847.1" y="713.7" width="2.6" height="2.6" fill="#cccc00"/>
<rect x="888.3" y="720.1" width="2.6" height="2.6" fill="#cccc00"/>
<rect x="842.5" y="737.7" width="2.6" height="2.6" fill="#cccc00"/>
<rect x="871.1" y="752.9" width="2.6" height="2.6" fill="#cccc00"/>
<rect x="894.7" y="752.9" width="2.6" height="2.6" fill="#cccc00"/>
<rect x="709.1" y="757.5" width="2.6" height="2.6" fill="#cccc00"/>
<rect x="1039.3" y="772.7" width="2.6" height="2.6" fill="#cccc00"/>
<rect x="1115.7" y="799.0" width="2.6" height="2.6" fill="#cccc00"/>
<rect x="958.4" y="785.7" width="2.6" height="2.6" fill="#cccc00"/>
<rect x="840.3" y="798.7" width="2.6" height="2.6" fill="#cccc00"/>
<rect x="914.7" y="796.4" width="2.6" height="2.6" fill="#cccc00"/>
<rect x="971.4" y="805.2" width="2.6" height="2.6" fill="#cccc00"/>
<rect x="969.2" y="810.1" width="2.6" height="2.6" fill="#cccc00"/>
<rect x="752.7" y="810.1" width="2.6" height="2.6" fill="#cccc00"/>
<rect x="510.1" y="812.0" width="2.6" height="2.6" fill="#cccc00"/>
<rect x="606.2" y="831.5" width="2.6" height="2.6" fill="#cccc00"/>
<rect x="1054.5" y="831.5" width="2.6" height="2.6" fill="#cccc00"/>
<rect x="411.7" y="790.3" width="2.6" height="2.6" fill="#cccc00"/>
<rect x="728.6" y="868.7" width="2.6" height="2.6" fill="#cccc00"/>
<rect x="505.7" y="882.1" width="2.6" height="2.6" fill="#cccc00"/>
<rect x="612.7" y="879.9" width="2.6" height="2.6" fill="#cccc00"/>
<rect x="623.7" y="895.1" width="2.6" height="2.6" fill="#cccc00"/>
<rect x="649.7" y="897.4" width="2.6" height="2.6" fill="#cccc00"/>
<rect x="929.7" y="895.1" width="2.6" height="2.6" fill="#cccc00"/>
<rect x="429.2" y="923.4" width="2.6" height="2.6" fill="#cccc00"/>
<rect x="547.4" y="919.2" width="2.6" height="2.6" fill="#cccc00"/>
<rect x="638.7" y="936.4" width="2.6" height="2.6" fill="#cccc00"/>
<rect x="645.7" y="936.4" width="2.6" height="2.6" fill="#cccc00"/>
<rect x="1052.3" y="926.0" width="2.6" height="2.6" fill="#cccc00"/>
<rect x="1065.6" y="934.7" width="2.6" height="2.6" fill="#cccc00"/>
<rect x="492.5" y="943.2" width="2.6" height="2.6" fill="#cccc00"/>
<rect x="512.3" y="951.9" width="2.6" height="2.6" fill="#cccc00"/>
<rect x="798.7" y="951.9" width="2.6" height="2.6" fill="#cccc00"/>
<rect x="929.7" y="956.5" width="2.6" height="2.6" fill="#cccc00"/>
<rect x="510.1" y="967.2" width="2.6" height="2.6" fill="#cccc00"/>
<rect x="435.7" y="978.2" width="2.6" height="2.6" fill="#cccc00"/>
<rect x="472.7" y="976.0" width="2.6" height="2.6" fill="#cccc00"/>
<rect x="1107.1" y="995.7" width="2.6" height="2.6" fill="#cccc00"/>
<rect x="422.4" y="1006.5" width="2.6" height="2.6" fill="#cccc00"/>
<rect x="792.2" y="1020.1" width="2.6" height="2.6" fill="#cccc00"/>
<rect x="597.4" y="1028.7" width="2.6" height="2.6" fill="#cccc00"/>
<rect x="741.9" y="1028.7" width="2.6" height="2.6" fill="#cccc00"/>
<rect x="448.7" y="1041.6" width="2.6" height="2.6" fill="#cccc00"/>
<rect x="510.1" y="1058.7" width="2.6" height="2.6" fill="#cccc00"/>
<rect x="420.5" y="1067.7" width="2.6" height="2.6" fill="#cccc00"/>
<rect x="628.2" y="1061.4" width="2.6" height="2.6" fill="#cccc00"/>
<rect x="999.7" y="1063.7" width="2.6" height="2.6" fill="#cccc00"/>
<rect x="486.0" y="1089.9" width="2.6" height="2.6" fill="#cccc00"/>
<rect x="527.7" y="1091.9" width="2.6" height="2.6" fill="#cccc00"/>
<rect x="805.5" y="1098.7" width="2.6" height="2.6" fill="#cccc00"/>
<rect x="1032.7" y="1089.9" width="2.6" height="2.6" fill="#cccc00"/>
<rect x="575.7" y="1109.4" width="2.6" height="2.6" fill="#cccc00"/>
<rect x="643.5" y="1118.2" width="2.6" height="2.6" fill="#cccc00"/>
<rect x="698.1" y="1120.1" width="2.6" height="2.6" fill="#cccc00"/>
<rect x="715.7" y="1124.3" width="2.6" height="2.6" fill="#cccc00"/>
<rect x="759.4" y="1118.2" width="2.6" height="2.6" fill="#cccc00"/>
<rect x="1115.7" y="1122.4" width="2.6" height="2.6" fill="#cccc00"/>
<rect x="1094.2" y="1135.4" width="2.6" height="2.6" fill="#cccc00"/>
<rect x="614.7" y="1135.4" width="2.6" height="2.6" fill="#cccc00"/>
<rect x="614.7" y="1144.2" width="2.6" height="2.6" fill="#cccc00"/>
<rect x="612.7" y="1157.1" width="2.6" height="2.6" fill="#cccc00"/>
<rect x="551.7" y="1152.9" width="2.6" height="2.6" fill="#cccc00"/>
<rect x="875.0" y="1144.2" width="2.6" height="2.6" fill="#cccc00"/>
<rect x="862.0" y="1159.7" width="2.6" height="2.6" fill="#cccc00"/>
<rect x="1048.1" y="1153.2" width="2.6" height="2.6" fill="#cccc00"/>
<rect x="577.7" y="1181.5" width="2.6" height="2.6" fill="#cccc00"/>
<rect x="1023.7" y="1195.5" width="2.6" height="2.6" fill="#cccc00"/>
<rect x="1197.1" y="715.7" width="2.6" height="2.6" fill="#cccc00"/>
<rect x="1264.7" y="720.1" width="2.6" height="2.6" fill="#cccc00"/>
<rect x="1380.5" y="724.3" width="2.6" height="2.6" fill="#cccc00"/>
<rect x="1382.7" y="733.1" width="2.6" height="2.6" fill="#cccc00"/>
<rect x="1664.7" y="713.7" width="2.6" height="2.6" fill="#cccc00"/>
<rect x="1505.2" y="698.7" width="2.6" height="2.6" fill="#cccc00"/>
<rect x="1194.7" y="759.4" width="2.6" height="2.6" fill="#cccc00"/>
<rect x="1446.1" y="755.2" width="2.6" height="2.6" fill="#cccc00"/>
<rect x="1513.7" y="764.0" width="2.6" height="2.6" fill="#cccc00"/>
<rect x="1745.7" y="761.7" width="2.6" height="2.6" fill="#cccc00"/>
<rect x="1785.1" y="752.9" width="2.6" height="2.6" fill="#cccc00"/>
<rect x="1835.1" y="775.0" width="2.6" height="2.6" fill="#cccc00"/>
<rect x="1236.0" y="783.7" width="2.6" height="2.6" fill="#cccc00"/>
<rect x="1290.9" y="779.2" width="2.6" height="2.6" fill="#cccc00"/>
<rect x="1115.7" y="799.0" width="2.6" height="2.6" fill="#cccc00"/>
<rect x="1487.7" y="794.5" width="2.6" height="2.6" fill="#cccc00"/>
<rect x="1555.5" y="799.0" width="2.6" height="2.6" fill="#cccc00"/>
<rect x="1752.3" y="783.7" width="2.6" height="2.6" fill="#cccc00"/>
<rect x="1820.1" y="814.0" width="2.6" height="2.6" fill="#cccc00"/>
<rect x="1815.7" y="831.5" width="2.6" height="2.6" fill="#cccc00"/>
<rect x="1553.2" y="818.7" width="2.6" height="2.6" fill="#cccc00"/>
<rect x="1518.2" y="829.5" width="2.6" height="2.6" fill="#cccc00"/>
<rect x="1623.4" y="831.5" width="2.6" height="2.6" fill="#cccc00"/>
<rect x="1413.3" y="864.7" width="2.6" height="2.6" fill="#cccc00"/>
<rect x="1557.5" y="864.7" width="2.6" height="2.6" fill="#cccc00"/>
<rect x="1341.2" y="882.1" width="2.6" height="2.6" fill="#cccc00"/>
<rect x="1592.7" y="906.2" width="2.6" height="2.6" fill="#cccc00"/>
<rect x="1277.7" y="921.4" width="2.6" height="2.6" fill="#cccc00"/>
<rect x="1448.4" y="925.7" width="2.6" height="2.6" fill="#cccc00"/>
<rect x="1227.3" y="945.5" width="2.6" height="2.6" fill="#cccc00"/>
<rect x="1358.4" y="976.3" width="2.6" height="2.6" fill="#cccc00"/>
<rect x="1419.7" y="991.2" width="2.6" height="2.6" fill="#cccc00"/>
<rect x="1107.1" y="995.7" width="2.6" height="2.6" fill="#cccc00"/>
<rect x="1564.3" y="1002.3" width="2.6" height="2.6" fill="#cccc00"/>
<rect x="1262.3" y="1039.3" width="2.6" height="2.6" fill="#cccc00"/>
<rect x="1310.7" y="1052.7" width="2.6" height="2.6" fill="#cccc00"/>
<rect x="1179.5" y="1061.0" width="2.6" height="2.6" fill="#cccc00"/>
<rect x="1279.5" y="1078.6" width="2.6" height="2.6" fill="#cccc00"/>
<rect x="1548.7" y="1054.7" width="2.6" height="2.6" fill="#cccc00"/>
<rect x="1476.7" y="1063.7" width="2.6" height="2.6" fill="#cccc00"/>
<rect x="1520.7" y="1069.7" width="2.6" height="2.6" fill="#cccc00"/>
<rect x="1524.7" y="1069.7" width="2.6" height="2.6" fill="#cccc00"/>
<rect x="1417.7" y="1076.3" width="2.6" height="2.6" fill="#cccc00"/>
<rect x="1492.2" y="1087.3" width="2.6" height="2.6" fill="#cccc00"/>
<rect x="1247.1" y="1102.9" width="2.6" height="2.6" fill="#cccc00"/>
<rect x="1273.4" y="1102.9" width="2.6" height="2.6" fill="#cccc00"/>
<rect x="1115.7" y="1122.4" width="2.6" height="2.6" fill="#cccc00"/>
<rect x="1522.7" y="1109.4" width="2.6" height="2.6" fill="#cccc00"/>
<rect x="1557.5" y="1111.4" width="2.6" height="2.6" fill="#cccc00"/>
<rect x="1542.2" y="1120.1" width="2.6" height="2.6" fill="#cccc00"/>
<rect x="1684.4" y="1104.9" width="2.6" height="2.6" fill="#cccc00"/>
<rect x="1737.0" y="1122.4" width="2.6" height="2.6" fill="#cccc00"/>
<rect x="1485.7" y="1135.4" width="2.6" height="2.6" fill="#cccc00"/>
<rect x="1483.4" y="1144.2" width="2.6" height="2.6" fill="#cccc00"/>
<rect x="1483.4" y="1155.2" width="2.6" height="2.6" fill="#cccc00"/>
<rect x="1623.4" y="1153.2" width="2.6" height="2.6" fill="#cccc00"/>
<rect x="1653.7" y="1146.4" width="2.6" height="2.6" fill="#cccc00"/>
<rect x="1673.4" y="1164.0" width="2.6" height="2.6" fill="#cccc00"/>
<rect x="1157.1" y="1164.0" width="2.6" height="2.6" fill="#cccc00"/>
<rect x="1356.5" y="1168.5" width="2.6" height="2.6" fill="#cccc00"/>
<rect x="1391.6" y="1181.5" width="2.6" height="2.6" fill="#cccc00"/>
<rect x="1496.7" y="1179.2" width="2.6" height="2.6" fill="#cccc00"/>
<rect x="1557.5" y="1175.0" width="2.6" height="2.6" fill="#cccc00"/>
<rect x="1531.2" y="1186.0" width="2.6" height="2.6" fill="#cccc00"/>
<rect x="1592.5" y="1195.5" width="2.6" height="2.6" fill="#cccc00"/>
<rect x="1223.4" y="1196.4" width="2.6" height="2.6" fill="#cccc00"/>
<rect x="2014.7" y="720.3" width="2.6" height="2.6" fill="#cccc00"/>
<rect x="2147.7" y="711.3" width="2.6" height="2.6" fill="#cccc00"/>
<rect x="2093.7" y="731.1" width="2.6" height="2.6" fill="#cccc00"/>
<rect x="1949.4" y="759.7" width="2.6" height="2.6" fill="#cccc00"/>
<rect x="1964.2" y="766.1" width="2.6" height="2.6" fill="#cccc00"/>
<rect x="1990.7" y="761.4" width="2.6" height="2.6" fill="#cccc00"/>
<rect x="1835.5" y="775.1" width="2.6" height="2.6" fill="#cccc00"/>
<rect x="2012.7" y="776.6" width="2.6" height="2.6" fill="#cccc00"/>
<rect x="2089.3" y="766.1" width="2.6" height="2.6" fill="#cccc00"/>
<rect x="2246.4" y="772.7" width="2.6" height="2.6" fill="#cccc00"/>
<rect x="2283.7" y="776.9" width="2.6" height="2.6" fill="#cccc00"/>
<rect x="2338.7" y="754.9" width="2.6" height="2.6" fill="#cccc00"/>
<rect x="2329.7" y="792.4" width="2.6" height="2.6" fill="#cccc00"/>
<rect x="2486.7" y="715.3" width="2.6" height="2.6" fill="#cccc00"/>
<rect x="2552.5" y="726.5" width="2.6" height="2.6" fill="#cccc00"/>
<rect x="2598.7" y="729.0" width="2.6" height="2.6" fill="#cccc00"/>
<rect x="2467.4" y="744.1" width="2.6" height="2.6" fill="#cccc00"/>
<rect x="2508.7" y="754.9" width="2.6" height="2.6" fill="#cccc00"/>
<rect x="2550.3" y="759.7" width="2.6" height="2.6" fill="#cccc00"/>
<rect x="2640.1" y="754.9" width="2.6" height="2.6" fill="#cccc00"/>
<rect x="2484.7" y="785.6" width="2.6" height="2.6" fill="#cccc00"/>
<rect x="1819.7" y="814.1" width="2.6" height="2.6" fill="#cccc00"/>
<rect x="1815.7" y="831.7" width="2.6" height="2.6" fill="#cccc00"/>
<rect x="1955.5" y="827.4" width="2.6" height="2.6" fill="#cccc00"/>
<rect x="1999.5" y="810.1" width="2.6" height="2.6" fill="#cccc00"/>
<rect x="2008.1" y="829.6" width="2.6" height="2.6" fill="#cccc00"/>
<rect x="2198.1" y="866.3" width="2.6" height="2.6" fill="#cccc00"/>
<rect x="2329.7" y="866.3" width="2.6" height="2.6" fill="#cccc00"/>
<rect x="2213.7" y="884.0" width="2.6" height="2.6" fill="#cccc00"/>
<rect x="2242.1" y="879.7" width="2.6" height="2.6" fill="#cccc00"/>
<rect x="2152.7" y="895.2" width="2.6" height="2.6" fill="#cccc00"/>
<rect x="2532.7" y="864.5" width="2.6" height="2.6" fill="#cccc00"/>
<rect x="2495.5" y="886.2" width="2.6" height="2.6" fill="#cccc00"/>
<rect x="2493.4" y="890.7" width="2.6" height="2.6" fill="#cccc00"/>
<rect x="2515.4" y="895.2" width="2.6" height="2.6" fill="#cccc00"/>
<rect x="2592.1" y="895.2" width="2.6" height="2.6" fill="#cccc00"/>
<rect x="1977.5" y="912.5" width="2.6" height="2.6" fill="#cccc00"/>
<rect x="2003.7" y="910.3" width="2.6" height="2.6" fill="#cccc00"/>
<rect x="1890.3" y="950.0" width="2.6" height="2.6" fill="#cccc00"/>
<rect x="2106.6" y="943.1" width="2.6" height="2.6" fill="#cccc00"/>
<rect x="2401.7" y="930.1" width="2.6" height="2.6" fill="#cccc00"/>
<rect x="2511.4" y="934.5" width="2.6" height="2.6" fill="#cccc00"/>
<rect x="2351.7" y="950.0" width="2.6" height="2.6" fill="#cccc00"/>
<rect x="2281.7" y="953.9" width="2.6" height="2.6" fill="#cccc00"/>
<rect x="2393.2" y="956.5" width="2.6" height="2.6" fill="#cccc00"/>
<rect x="1848.4" y="973.7" width="2.6" height="2.6" fill="#cccc00"/>
<rect x="2075.9" y="971.6" width="2.6" height="2.6" fill="#cccc00"/>
<rect x="2224.4" y="973.7" width="2.6" height="2.6" fill="#cccc00"/>
<rect x="2287.7" y="982.4" width="2.6" height="2.6" fill="#cccc00"/>
<rect x="2003.7" y="993.6" width="2.6" height="2.6" fill="#cccc00"/>
<rect x="2135.0" y="995.7" width="2.6" height="2.6" fill="#cccc00"/>
<rect x="2204.7" y="995.7" width="2.6" height="2.6" fill="#cccc00"/>
<rect x="2578.7" y="984.9" width="2.6" height="2.6" fill="#cccc00"/>
<rect x="2620.7" y="988.9" width="2.6" height="2.6" fill="#cccc00"/>
<rect x="2590.0" y="1004.4" width="2.6" height="2.6" fill="#cccc00"/>
<rect x="2521.7" y="1002.2" width="2.6" height="2.6" fill="#cccc00"/>
<rect x="2456.7" y="1008.7" width="2.6" height="2.6" fill="#cccc00"/>
<rect x="1951.5" y="1017.7" width="2.6" height="2.6" fill="#cccc00"/>
<rect x="2006.0" y="1015.6" width="2.6" height="2.6" fill="#cccc00"/>
<rect x="2010.3" y="1039.4" width="2.6" height="2.6" fill="#cccc00"/>
<rect x="2189.5" y="1035.0" width="2.6" height="2.6" fill="#cccc00"/>
<rect x="2185.5" y="1052.3" width="2.6" height="2.6" fill="#cccc00"/>
<rect x="2364.7" y="1035.0" width="2.6" height="2.6" fill="#cccc00"/>
<rect x="2443.3" y="1041.5" width="2.6" height="2.6" fill="#cccc00"/>
<rect x="2548.5" y="1026.4" width="2.6" height="2.6" fill="#cccc00"/>
<rect x="2524.4" y="1035.0" width="2.6" height="2.6" fill="#cccc00"/>
<rect x="2552.7" y="1044.0" width="2.6" height="2.6" fill="#cccc00"/>
<rect x="2521.7" y="1063.5" width="2.6" height="2.6" fill="#cccc00"/>
<rect x="2546.3" y="1072.5" width="2.6" height="2.6" fill="#cccc00"/>
<rect x="2526.5" y="1102.7" width="2.6" height="2.6" fill="#cccc00"/>
<rect x="1888.1" y="1061.3" width="2.6" height="2.6" fill="#cccc00"/>
<rect x="1888.1" y="1087.7" width="2.6" height="2.6" fill="#cccc00"/>
<rect x="2073.7" y="1089.7" width="2.6" height="2.6" fill="#cccc00"/>
<rect x="1903.2" y="1116.1" width="2.6" height="2.6" fill="#cccc00"/>
<rect x="2345.2" y="1120.1" width="2.6" height="2.6" fill="#cccc00"/>
<rect x="2412.7" y="1135.7" width="2.6" height="2.6" fill="#cccc00"/>
<rect x="2163.5" y="1139.9" width="2.6" height="2.6" fill="#cccc00"/>
<rect x="2196.3" y="1142.1" width="2.6" height="2.6" fill="#cccc00"/>
<rect x="2327.5" y="1148.7" width="2.6" height="2.6" fill="#cccc00"/>
<rect x="2557.2" y="1146.4" width="2.6" height="2.6" fill="#cccc00"/>
<rect x="2561.5" y="1146.4" width="2.6" height="2.6" fill="#cccc00"/>
<rect x="2640.1" y="1148.7" width="2.6" height="2.6" fill="#cccc00"/>
<rect x="1925.2" y="1166.2" width="2.6" height="2.6" fill="#cccc00"/>
<rect x="1955.5" y="1170.6" width="2.6" height="2.6" fill="#cccc00"/>
<rect x="1851.0" y="1177.1" width="2.6" height="2.6" fill="#cccc00"/>
<rect x="1984.3" y="1190.0" width="2.6" height="2.6" fill="#cccc00"/>
<rect x="2410.4" y="1185.7" width="2.6" height="2.6" fill="#cccc00"/>
<rect x="2419.5" y="1192.6" width="2.6" height="2.6" fill="#cccc00"/>
<rect x="2504.5" y="1181.4" width="2.6" height="2.6" fill="#cccc00"/>
<rect x="2462.7" y="1194.7" width="2.6" height="2.6" fill="#cccc00"/>
<rect x="615.2" y="1207.7" width="2.6" height="2.6" fill="#cccc00"/>
<rect x="649.7" y="1249.5" width="2.6" height="2.6" fill="#cccc00"/>
<rect x="785.7" y="1231.9" width="2.6" height="2.6" fill="#cccc00"/>
<rect x="794.5" y="1241.0" width="2.6" height="2.6" fill="#cccc00"/>
<rect x="864.7" y="1251.5" width="2.6" height="2.6" fill="#cccc00"/>
<rect x="774.6" y="1267.1" width="2.6" height="2.6" fill="#cccc00"/>
<rect x="785.7" y="1267.1" width="2.6" height="2.6" fill="#cccc00"/>
<rect x="761.4" y="1277.9" width="2.6" height="2.6" fill="#cccc00"/>
<rect x="929.9" y="1271.4" width="2.6" height="2.6" fill="#cccc00"/>
<rect x="1024.2" y="1196.7" width="2.6" height="2.6" fill="#cccc00"/>
<rect x="532.1" y="1295.4" width="2.6" height="2.6" fill="#cccc00"/>
<rect x="538.5" y="1291.0" width="2.6" height="2.6" fill="#cccc00"/>
<rect x="447.0" y="1332.6" width="2.6" height="2.6" fill="#cccc00"/>
<rect x="735.4" y="1313.0" width="2.6" height="2.6" fill="#cccc00"/>
<rect x="860.0" y="1315.0" width="2.6" height="2.6" fill="#cccc00"/>
<rect x="1010.0" y="1303.5" width="2.6" height="2.6" fill="#cccc00"/>
<rect x="1106.9" y="1304.2" width="2.6" height="2.6" fill="#cccc00"/>
<rect x="640.7" y="1339.0" width="2.6" height="2.6" fill="#cccc00"/>
<rect x="698.3" y="1345.7" width="2.6" height="2.6" fill="#cccc00"/>
<rect x="700.3" y="1356.5" width="2.6" height="2.6" fill="#cccc00"/>
<rect x="1078.5" y="1358.9" width="2.6" height="2.6" fill="#cccc00"/>
<rect x="1045.7" y="1384.9" width="2.6" height="2.6" fill="#cccc00"/>
<rect x="649.7" y="1396.1" width="2.6" height="2.6" fill="#cccc00"/>
<rect x="748.2" y="1400.5" width="2.6" height="2.6" fill="#cccc00"/>
<rect x="779.0" y="1400.5" width="2.6" height="2.6" fill="#cccc00"/>
<rect x="914.7" y="1382.9" width="2.6" height="2.6" fill="#cccc00"/>
<rect x="923.5" y="1382.9" width="2.6" height="2.6" fill="#cccc00"/>
<rect x="717.7" y="1407.2" width="2.6" height="2.6" fill="#cccc00"/>
<rect x="877.6" y="1416.0" width="2.6" height="2.6" fill="#cccc00"/>
<rect x="908.0" y="1411.6" width="2.6" height="2.6" fill="#cccc00"/>
<rect x="1111.3" y="1428.7" width="2.6" height="2.6" fill="#cccc00"/>
<rect x="1118.1" y="1440.0" width="2.6" height="2.6" fill="#cccc00"/>
<rect x="683.1" y="1450.7" width="2.6" height="2.6" fill="#cccc00"/>
<rect x="1146.4" y="1446.0" width="2.6" height="2.6" fill="#cccc00"/>
<rect x="597.3" y="1477.1" width="2.6" height="2.6" fill="#cccc00"/>
<rect x="645.6" y="1479.1" width="2.6" height="2.6" fill="#cccc00"/>
<rect x="706.7" y="1496.7" width="2.6" height="2.6" fill="#cccc00"/>
<rect x="853.7" y="1472.4" width="2.6" height="2.6" fill="#cccc00"/>
<rect x="934.7" y="1472.4" width="2.6" height="2.6" fill="#cccc00"/>
<rect x="1037.0" y="1470.0" width="2.6" height="2.6" fill="#cccc00"/>
<rect x="542.9" y="1498.7" width="2.6" height="2.6" fill="#cccc00"/>
<rect x="576.0" y="1516.3" width="2.6" height="2.6" fill="#cccc00"/>
<rect x="695.9" y="1520.7" width="2.6" height="2.6" fill="#cccc00"/>
<rect x="610.7" y="1548.7" width="2.6" height="2.6" fill="#cccc00"/>
<rect x="661.1" y="1548.7" width="2.6" height="2.6" fill="#cccc00"/>
<rect x="558.1" y="1562.2" width="2.6" height="2.6" fill="#cccc00"/>
<rect x="602.0" y="1564.2" width="2.6" height="2.6" fill="#cccc00"/>
<rect x="667.5" y="1571.0" width="2.6" height="2.6" fill="#cccc00"/>
<rect x="486.2" y="1599.4" width="2.6" height="2.6" fill="#cccc00"/>
<rect x="777.0" y="1590.6" width="2.6" height="2.6" fill="#cccc00"/>
<rect x="840.1" y="1599.4" width="2.6" height="2.6" fill="#cccc00"/>
<rect x="871.2" y="1590.6" width="2.6" height="2.6" fill="#cccc00"/>
<rect x="880.0" y="1590.6" width="2.6" height="2.6" fill="#cccc00"/>
<rect x="1006.7" y="1616.9" width="2.6" height="2.6" fill="#cccc00"/>
<rect x="427.1" y="1632.1" width="2.6" height="2.6" fill="#cccc00"/>
<rect x="536.2" y="1647.3" width="2.6" height="2.6" fill="#cccc00"/>
<rect x="897.2" y="1645.0" width="2.6" height="2.6" fill="#cccc00"/>
<rect x="932.3" y="1645.0" width="2.6" height="2.6" fill="#cccc00"/>
<rect x="973.5" y="1649.3" width="2.6" height="2.6" fill="#cccc00"/>
<rect x="888.1" y="1656.1" width="2.6" height="2.6" fill="#cccc00"/>
<rect x="687.4" y="1662.5" width="2.6" height="2.6" fill="#cccc00"/>
<rect x="506.1" y="1666.9" width="2.6" height="2.6" fill="#cccc00"/>
<rect x="604.0" y="1678.1" width="2.6" height="2.6" fill="#cccc00"/>
<rect x="643.5" y="1673.3" width="2.6" height="2.6" fill="#cccc00"/>
<rect x="877.6" y="1671.7" width="2.6" height="2.6" fill="#cccc00"/>
<rect x="954.3" y="1668.9" width="2.6" height="2.6" fill="#cccc00"/>
<rect x="997.5" y="1678.1" width="2.6" height="2.6" fill="#cccc00"/>
<rect x="1087.7" y="1664.9" width="2.6" height="2.6" fill="#cccc00"/>
<rect x="1223.3" y="1196.7" width="2.6" height="2.6" fill="#cccc00"/>
<rect x="1284.4" y="1205.6" width="2.6" height="2.6" fill="#cccc00"/>
<rect x="1404.7" y="1208.0" width="2.6" height="2.6" fill="#cccc00"/>
<rect x="1468.2" y="1223.1" width="2.6" height="2.6" fill="#cccc00"/>
<rect x="1592.7" y="1196.7" width="2.6" height="2.6" fill="#cccc00"/>
<rect x="1828.9" y="1199.2" width="2.6" height="2.6" fill="#cccc00"/>
<rect x="1774.5" y="1223.1" width="2.6" height="2.6" fill="#cccc00"/>
<rect x="1728.2" y="1251.5" width="2.6" height="2.6" fill="#cccc00"/>
<rect x="1818.1" y="1256.2" width="2.6" height="2.6" fill="#cccc00"/>
<rect x="1833.2" y="1262.7" width="2.6" height="2.6" fill="#cccc00"/>
<rect x="1698.2" y="1260.3" width="2.6" height="2.6" fill="#cccc00"/>
<rect x="1196.7" y="1227.5" width="2.6" height="2.6" fill="#cccc00"/>
<rect x="1343.5" y="1265.0" width="2.6" height="2.6" fill="#cccc00"/>
<rect x="1242.9" y="1284.6" width="2.6" height="2.6" fill="#cccc00"/>
<rect x="1384.7" y="1286.7" width="2.6" height="2.6" fill="#cccc00"/>
<rect x="1107.1" y="1304.2" width="2.6" height="2.6" fill="#cccc00"/>
<rect x="1345.6" y="1306.2" width="2.6" height="2.6" fill="#cccc00"/>
<rect x="1314.8" y="1321.4" width="2.6" height="2.6" fill="#cccc00"/>
<rect x="1608.0" y="1299.8" width="2.6" height="2.6" fill="#cccc00"/>
<rect x="1625.5" y="1312.7" width="2.6" height="2.6" fill="#cccc00"/>
<rect x="1684.7" y="1321.4" width="2.6" height="2.6" fill="#cccc00"/>
<rect x="1768.1" y="1279.9" width="2.6" height="2.6" fill="#cccc00"/>
<rect x="1284.4" y="1343.7" width="2.6" height="2.6" fill="#cccc00"/>
<rect x="1437.1" y="1350.1" width="2.6" height="2.6" fill="#cccc00"/>
<rect x="1697.7" y="1341.4" width="2.6" height="2.6" fill="#cccc00"/>
<rect x="1723.7" y="1358.9" width="2.6" height="2.6" fill="#cccc00"/>
<rect x="1358.4" y="1374.1" width="2.6" height="2.6" fill="#cccc00"/>
<rect x="1516.1" y="1378.5" width="2.6" height="2.6" fill="#cccc00"/>
<rect x="1581.7" y="1387.3" width="2.6" height="2.6" fill="#cccc00"/>
<rect x="1148.7" y="1389.7" width="2.6" height="2.6" fill="#cccc00"/>
<rect x="1538.1" y="1411.3" width="2.6" height="2.6" fill="#cccc00"/>
<rect x="1111.5" y="1428.7" width="2.6" height="2.6" fill="#cccc00"/>
<rect x="1118.3" y="1440.0" width="2.6" height="2.6" fill="#cccc00"/>
<rect x="1146.3" y="1446.4" width="2.6" height="2.6" fill="#cccc00"/>
<rect x="1295.3" y="1442.0" width="2.6" height="2.6" fill="#cccc00"/>
<rect x="1391.5" y="1433.2" width="2.6" height="2.6" fill="#cccc00"/>
<rect x="1406.7" y="1442.0" width="2.6" height="2.6" fill="#cccc00"/>
<rect x="1334.4" y="1448.4" width="2.6" height="2.6" fill="#cccc00"/>
<rect x="1347.9" y="1450.7" width="2.6" height="2.6" fill="#cccc00"/>
<rect x="1229.7" y="1474.7" width="2.6" height="2.6" fill="#cccc00"/>
<rect x="1437.1" y="1468.3" width="2.6" height="2.6" fill="#cccc00"/>
<rect x="1422.2" y="1481.2" width="2.6" height="2.6" fill="#cccc00"/>
<rect x="1435.1" y="1485.9" width="2.6" height="2.6" fill="#cccc00"/>
<rect x="1524.9" y="1481.2" width="2.6" height="2.6" fill="#cccc00"/>
<rect x="1157.5" y="1496.7" width="2.6" height="2.6" fill="#cccc00"/>
<rect x="1750.5" y="1485.9" width="2.6" height="2.6" fill="#cccc00"/>
<rect x="1269.2" y="1524.7" width="2.6" height="2.6" fill="#cccc00"/>
<rect x="1454.7" y="1540.3" width="2.6" height="2.6" fill="#cccc00"/>
<rect x="1816.0" y="1538.2" width="2.6" height="2.6" fill="#cccc00"/>
<rect x="1389.5" y="1597.3" width="2.6" height="2.6" fill="#cccc00"/>
<rect x="1150.7" y="1619.0" width="2.6" height="2.6" fill="#cccc00"/>
<rect x="1323.7" y="1634.5" width="2.6" height="2.6" fill="#cccc00"/>
<rect x="1319.2" y="1647.3" width="2.6" height="2.6" fill="#cccc00"/>
<rect x="1524.9" y="1662.5" width="2.6" height="2.6" fill="#cccc00"/>
<rect x="1704.9" y="1666.9" width="2.6" height="2.6" fill="#cccc00"/>
<rect x="1214.5" y="1688.9" width="2.6" height="2.6" fill="#cccc00"/>
<rect x="1829.0" y="1198.7" width="2.6" height="2.6" fill="#cccc00"/>
<rect x="1984.3" y="1189.7" width="2.6" height="2.6" fill="#cccc00"/>
<rect x="1966.7" y="1207.5" width="2.6" height="2.6" fill="#cccc00"/>
<rect x="1942.5" y="1242.9" width="2.6" height="2.6" fill="#cccc00"/>
<rect x="1984.3" y="1238.5" width="2.6" height="2.6" fill="#cccc00"/>
<rect x="2019.3" y="1251.5" width="2.6" height="2.6" fill="#cccc00"/>
<rect x="1818.2" y="1255.7" width="2.6" height="2.6" fill="#cccc00"/>
<rect x="1833.3" y="1262.3" width="2.6" height="2.6" fill="#cccc00"/>
<rect x="1855.3" y="1280.0" width="2.6" height="2.6" fill="#cccc00"/>
<rect x="2091.4" y="1203.6" width="2.6" height="2.6" fill="#cccc00"/>
<rect x="2080.7" y="1240.7" width="2.6" height="2.6" fill="#cccc00"/>
<rect x="2266.3" y="1218.7" width="2.6" height="2.6" fill="#cccc00"/>
<rect x="2279.2" y="1207.5" width="2.6" height="2.6" fill="#cccc00"/>
<rect x="2373.3" y="1205.7" width="2.6" height="2.6" fill="#cccc00"/>
<rect x="2410.4" y="1185.9" width="2.6" height="2.6" fill="#cccc00"/>
<rect x="2419.5" y="1192.7" width="2.6" height="2.6" fill="#cccc00"/>
<rect x="2426.0" y="1216.6" width="2.6" height="2.6" fill="#cccc00"/>
<rect x="2463.1" y="1194.9" width="2.6" height="2.6" fill="#cccc00"/>
<rect x="2504.5" y="1181.6" width="2.6" height="2.6" fill="#cccc00"/>
<rect x="2520.0" y="1234.2" width="2.6" height="2.6" fill="#cccc00"/>
<rect x="2533.0" y="1262.3" width="2.6" height="2.6" fill="#cccc00"/>
<rect x="2627.1" y="1267.0" width="2.6" height="2.6" fill="#cccc00"/>
<rect x="1728.7" y="1251.7" width="2.6" height="2.6" fill="#cccc00"/>
<rect x="2018.7" y="1251.7" width="2.6" height="2.6" fill="#cccc00"/>
<rect x="1767.7" y="1279.7" width="2.6" height="2.6" fill="#cccc00"/>
<rect x="1723.7" y="1358.7" width="2.6" height="2.6" fill="#cccc00"/>
<rect x="2465.7" y="1411.3" width="2.6" height="2.6" fill="#cccc00"/>
<rect x="2486.7" y="1478.7" width="2.6" height="2.6" fill="#cccc00"/>
<rect x="2635.7" y="1500.7" width="2.6" height="2.6" fill="#cccc00"/>
<rect x="2635.7" y="1514.4" width="2.6" height="2.6" fill="#cccc00"/>
<rect x="1750.2" y="1485.7" width="2.6" height="2.6" fill="#cccc00"/>
<rect x="1815.7" y="1538.2" width="2.6" height="2.6" fill="#cccc00"/>
<rect x="2121.7" y="1533.7" width="2.6" height="2.6" fill="#cccc00"/>
<rect x="2301.3" y="1538.2" width="2.6" height="2.6" fill="#cccc00"/>
<rect x="2346.7" y="1629.7" width="2.6" height="2.6" fill="#cccc00"/>
<rect x="2544.1" y="1623.5" width="2.6" height="2.6" fill="#cccc00"/>
<rect x="1704.3" y="1667.4" width="2.6" height="2.6" fill="#cccc00"/>
<rect x="2021.2" y="1671.4" width="2.6" height="2.6" fill="#cccc00"/>
<rect x="2078.3" y="1675.7" width="2.6" height="2.6" fill="#cccc00"/>
<rect x="1808.2" y="1266.7" width="2.6" height="2.6" fill="#cccc00"/>
<rect x="636.8" y="505.7" width="3" height="3" fill="#b8b8b8"/>
<rect x="973.2" y="538.5" width="3" height="3" fill="#b8b8b8"/>
<rect x="1347.5" y="304.5" width="3" height="3" fill="#b8b8b8"/>
<rect x="1310.5" y="488.2" width="3" height="3" fill="#b8b8b8"/>
<rect x="702.1" y="897.2" width="3" height="3" fill="#b8b8b8"/>
<rect x="768.0" y="906.0" width="3" height="3" fill="#b8b8b8"/>
<rect x="1330.0" y="1118.0" width="3" height="3" fill="#b8b8b8"/>
<rect x="2187.5" y="512.5" width="3" height="3" fill="#b8b8b8"/>
<rect x="1931.5" y="588.8" width="3" height="3" fill="#b8b8b8"/>
<rect x="1935.5" y="588.8" width="3" height="3" fill="#b8b8b8"/>
<rect x="2442.5" y="623.7" width="3" height="3" fill="#b8b8b8"/>
<rect x="1846.5" y="1067.5" width="3" height="3" fill="#b8b8b8"/>
<rect x="658.5" y="1236.1" width="3" height="3" fill="#b8b8b8"/>
<rect x="787.5" y="1214.2" width="3" height="3" fill="#b8b8b8"/>
<rect x="805.5" y="1249.3" width="3" height="3" fill="#b8b8b8"/>
<rect x="820.7" y="1472.2" width="3" height="3" fill="#b8b8b8"/>
<rect x="825.7" y="1617.7" width="3" height="3" fill="#b8b8b8"/>
<rect x="603.5" y="1634.3" width="3" height="3" fill="#b8b8b8"/>
<rect x="1537.9" y="1227.3" width="3" height="3" fill="#b8b8b8"/>
<rect x="1417.3" y="1489.8" width="3" height="3" fill="#b8b8b8"/>
<rect x="1288.6" y="1505.0" width="3" height="3" fill="#b8b8b8"/>
<rect x="1616.9" y="1518.1" width="3" height="3" fill="#b8b8b8"/>
<rect x="2408.5" y="1257.8" width="3" height="3" fill="#b8b8b8"/>
<rect x="810.3" y="375.3" width="6" height="6" fill="#ffff00"/>
<rect x="1033.0" y="410.4" width="6" height="6" fill="#ffff00"/>
<rect x="543.0" y="690.2" width="6" height="6" fill="#ffff00"/>
<rect x="1337.0" y="522.0" width="6" height="6" fill="#ffff00"/>
<rect x="1396.0" y="677.0" width="6" height="6" fill="#ffff00"/>
<rect x="2164.0" y="502.2" width="6" height="6" fill="#ffff00"/>
<rect x="2258.0" y="478.0" width="6" height="6" fill="#ffff00"/>
<rect x="1114.0" y="720.7" width="6" height="6" fill="#ffff00"/>
<rect x="1027.0" y="751.2" width="6" height="6" fill="#ffff00"/>
<rect x="832.0" y="832.4" width="6" height="6" fill="#ffff00"/>
<rect x="1114.0" y="720.7" width="6" height="6" fill="#ffff00"/>
<rect x="1339.5" y="1007.0" width="6" height="6" fill="#ffff00"/>
<rect x="2116.0" y="793.0" width="6" height="6" fill="#ffff00"/>
<rect x="2293.0" y="1158.0" width="6" height="6" fill="#ffff00"/>
<rect x="852.0" y="1247.8" width="6" height="6" fill="#ffff00"/>
<rect x="1125.5" y="1398.8" width="6" height="6" fill="#ffff00"/>
<rect x="1965.0" y="722.6" width="6" height="6" fill="#ffffff"/>
<circle cx="913.6" cy="709.5" r="8" fill="#ffff00"/>
<circle cx="1402" cy="275.4" r="8" fill="#ffff00"/>
<circle cx="1348" cy="390.3" r="5" fill="#ffff00"/>
<circle cx="1534" cy="387" r="5" fill="#ffff00"/>
<circle cx="1287.7" cy="623" r="8" fill="#ffff00"/>
<circle cx="1019" cy="848.4" r="8" fill="#ffff00"/>
<circle cx="802" cy="1174.4" r="8" fill="#ffff00"/>
<circle cx="1047" cy="1174.4" r="6" fill="#ffff00"/>
<circle cx="1667" cy="792.5" r="8" fill="#ffff00"/>
<circle cx="1333.8" cy="843.8" r="8" fill="#ffff00"/>
<circle cx="1296.4" cy="1042.9" r="8" fill="#ffff00"/>
<circle cx="1987.5" cy="838.8" r="5" fill="#ffff00"/>
<circle cx="2334" cy="1081" r="8" fill="#ffff00"/>
<circle cx="2648" cy="964" r="10" fill="#ffff00"/>
<circle cx="871" cy="1419.6" r="5" fill="#ffff00"/>
<circle cx="1442.8" cy="1371" r="8" fill="#ffff00"/>
<circle cx="1576.2" cy="1350.4" r="5" fill="#ffff00"/>
<circle cx="1550.2" cy="1552.4" r="12" fill="#ffff00"/>
<circle cx="771.8" cy="1635.8" r="8" fill="#ffffff"/>
<path d="M2338 1262.5 L2341.5 1266 L2338 1269.5 L2334.5 1266 Z" fill="#ff3a00"/><rect x="2337" y="1265" width="2" height="2" fill="#ffd040"/>
<path d="M2045 1273.5 L2048.5 1277 L2045 1280.5 L2041.5 1277 Z" fill="#ff3a00"/><rect x="2044" y="1276" width="2" height="2" fill="#ffd040"/>
<path d="M2316 1286.5 L2319.5 1290 L2316 1293.5 L2312.5 1290 Z" fill="#ff3a00"/><rect x="2315" y="1289" width="2" height="2" fill="#ffd040"/>
<path d="M2125.5 1299.5 L2129.0 1303 L2125.5 1306.5 L2122.0 1303 Z" fill="#ff3a00"/><rect x="2124.5" y="1302" width="2" height="2" fill="#ffd040"/>
<path d="M2152 1297.5 L2155.5 1301 L2152 1304.5 L2148.5 1301 Z" fill="#ff3a00"/><rect x="2151" y="1300" width="2" height="2" fill="#ffd040"/>
<path d="M2462 1288.5 L2465.5 1292 L2462 1295.5 L2458.5 1292 Z" fill="#ff3a00"/><rect x="2461" y="1291" width="2" height="2" fill="#ffd040"/>
<path d="M1896 1310.5 L1899.5 1314 L1896 1317.5 L1892.5 1314 Z" fill="#ff3a00"/><rect x="1895" y="1313" width="2" height="2" fill="#ffd040"/>
<path d="M1833 1337.1 L1836.5 1340.6 L1833 1344.1 L1829.5 1340.6 Z" fill="#ff3a00"/><rect x="1832" y="1339.6" width="2" height="2" fill="#ffd040"/>
<path d="M1983 1343.5 L1986.5 1347 L1983 1350.5 L1979.5 1347 Z" fill="#ff3a00"/><rect x="1982" y="1346" width="2" height="2" fill="#ffd040"/>
<path d="M2040 1345.5 L2043.5 1349 L2040 1352.5 L2036.5 1349 Z" fill="#ff3a00"/><rect x="2039" y="1348" width="2" height="2" fill="#ffd040"/>
<path d="M2062 1326.5 L2065.5 1330 L2062 1333.5 L2058.5 1330 Z" fill="#ff3a00"/><rect x="2061" y="1329" width="2" height="2" fill="#ffd040"/>
<path d="M2316 1343.5 L2319.5 1347 L2316 1350.5 L2312.5 1347 Z" fill="#ff3a00"/><rect x="2315" y="1346" width="2" height="2" fill="#ffd040"/>
<path d="M2357 1343.5 L2360.5 1347 L2357 1350.5 L2353.5 1347 Z" fill="#ff3a00"/><rect x="2356" y="1346" width="2" height="2" fill="#ffd040"/>
<path d="M2418.6 1326.5 L2422.1 1330 L2418.6 1333.5 L2415.1 1330 Z" fill="#ff3a00"/><rect x="2417.6" y="1329" width="2" height="2" fill="#ffd040"/>
<path d="M2536.6 1323.5 L2540.1 1327 L2536.6 1330.5 L2533.1 1327 Z" fill="#ff3a00"/><rect x="2535.6" y="1326" width="2" height="2" fill="#ffd040"/>
<path d="M2633 1334.5 L2636.5 1338 L2633 1341.5 L2629.5 1338 Z" fill="#ff3a00"/><rect x="2632" y="1337" width="2" height="2" fill="#ffd040"/>
<path d="M2305 1383.0 L2308.5 1386.5 L2305 1390.0 L2301.5 1386.5 Z" fill="#ff3a00"/><rect x="2304" y="1385.5" width="2" height="2" fill="#ffd040"/>
<path d="M1937.5 1389.5 L1941.0 1393 L1937.5 1396.5 L1934.0 1393 Z" fill="#ff3a00"/><rect x="1936.5" y="1392" width="2" height="2" fill="#ffd040"/>
<path d="M1939.5 1400.5 L1943.0 1404 L1939.5 1407.5 L1936.0 1404 Z" fill="#ff3a00"/><rect x="1938.5" y="1403" width="2" height="2" fill="#ffd040"/>
<path d="M1786.5 1424.5 L1790.0 1428 L1786.5 1431.5 L1783.0 1428 Z" fill="#ff3a00"/><rect x="1785.5" y="1427" width="2" height="2" fill="#ffd040"/>
<path d="M2068.8 1435.5 L2072.3 1439 L2068.8 1442.5 L2065.3 1439 Z" fill="#ff3a00"/><rect x="2067.8" y="1438" width="2" height="2" fill="#ffd040"/>
<path d="M2167 1415.5 L2170.5 1419 L2167 1422.5 L2163.5 1419 Z" fill="#ff3a00"/><rect x="2166" y="1418" width="2" height="2" fill="#ffd040"/>
<path d="M2467 1422.5 L2470.5 1426 L2467 1429.5 L2463.5 1426 Z" fill="#ff3a00"/><rect x="2466" y="1425" width="2" height="2" fill="#ffd040"/>
<path d="M2502 1444.2 L2505.5 1447.7 L2502 1451.2 L2498.5 1447.7 Z" fill="#ff3a00"/><rect x="2501" y="1446.7" width="2" height="2" fill="#ffd040"/>
<path d="M2576 1455.0 L2579.5 1458.5 L2576 1462.0 L2572.5 1458.5 Z" fill="#ff3a00"/><rect x="2575" y="1457.5" width="2" height="2" fill="#ffd040"/>
<path d="M2593.7 1446.2 L2597.2 1449.7 L2593.7 1453.2 L2590.2 1449.7 Z" fill="#ff3a00"/><rect x="2592.7" y="1448.7" width="2" height="2" fill="#ffd040"/>
<path d="M1731.8 1455.0 L1735.3 1458.5 L1731.8 1462.0 L1728.3 1458.5 Z" fill="#ff3a00"/><rect x="1730.8" y="1457.5" width="2" height="2" fill="#ffd040"/>
<path d="M2134 1465.9 L2137.5 1469.4 L2134 1472.9 L2130.5 1469.4 Z" fill="#ff3a00"/><rect x="2133" y="1468.4" width="2" height="2" fill="#ffd040"/>
<path d="M1974.6 1483.5 L1978.1 1487 L1974.6 1490.5 L1971.1 1487 Z" fill="#ff3a00"/><rect x="1973.6" y="1486" width="2" height="2" fill="#ffd040"/>
<path d="M2145 1487.5 L2148.5 1491 L2145 1494.5 L2141.5 1491 Z" fill="#ff3a00"/><rect x="2144" y="1490" width="2" height="2" fill="#ffd040"/>
<path d="M2287 1481.2 L2290.5 1484.7 L2287 1488.2 L2283.5 1484.7 Z" fill="#ff3a00"/><rect x="2286" y="1483.7" width="2" height="2" fill="#ffd040"/>
<path d="M2372.7 1485.5 L2376.2 1489 L2372.7 1492.5 L2369.2 1489 Z" fill="#ff3a00"/><rect x="2371.7" y="1488" width="2" height="2" fill="#ffd040"/>
<path d="M2197.6 1509.5 L2201.1 1513 L2197.6 1516.5 L2194.1 1513 Z" fill="#ff3a00"/><rect x="2196.6" y="1512" width="2" height="2" fill="#ffd040"/>
<path d="M2232.6 1505.5 L2236.1 1509 L2232.6 1512.5 L2229.1 1509 Z" fill="#ff3a00"/><rect x="2231.6" y="1508" width="2" height="2" fill="#ffd040"/>
<path d="M2385.6 1505.5 L2389.1 1509 L2385.6 1512.5 L2382.1 1509 Z" fill="#ff3a00"/><rect x="2384.6" y="1508" width="2" height="2" fill="#ffd040"/>
<path d="M2584.8 1507.5 L2588.3 1511 L2584.8 1514.5 L2581.3 1511 Z" fill="#ff3a00"/><rect x="2583.8" y="1510" width="2" height="2" fill="#ffd040"/>
<path d="M2628 1514.2 L2631.5 1517.7 L2628 1521.2 L2624.5 1517.7 Z" fill="#ff3a00"/><rect x="2627" y="1516.7" width="2" height="2" fill="#ffd040"/>
<path d="M2436 1529.5 L2439.5 1533 L2436 1536.5 L2432.5 1533 Z" fill="#ff3a00"/><rect x="2435" y="1532" width="2" height="2" fill="#ffd040"/>
<path d="M2239.5 1531.5 L2243.0 1535 L2239.5 1538.5 L2236.0 1535 Z" fill="#ff3a00"/><rect x="2238.5" y="1534" width="2" height="2" fill="#ffd040"/>
<path d="M1987.4 1553.5 L1990.9 1557 L1987.4 1560.5 L1983.9 1557 Z" fill="#ff3a00"/><rect x="1986.4" y="1556" width="2" height="2" fill="#ffd040"/>
<path d="M1733.8 1581.5 L1737.3 1585 L1733.8 1588.5 L1730.3 1585 Z" fill="#ff3a00"/><rect x="1732.8" y="1584" width="2" height="2" fill="#ffd040"/>
<path d="M2029 1583.5 L2032.5 1587 L2029 1590.5 L2025.5 1587 Z" fill="#ff3a00"/><rect x="2028" y="1586" width="2" height="2" fill="#ffd040"/>
<path d="M2200 1573.0 L2203.5 1576.5 L2200 1580.0 L2196.5 1576.5 Z" fill="#ff3a00"/><rect x="2199" y="1575.5" width="2" height="2" fill="#ffd040"/>
<path d="M2545.4 1568.5 L2548.9 1572 L2545.4 1575.5 L2541.9 1572 Z" fill="#ff3a00"/><rect x="2544.4" y="1571" width="2" height="2" fill="#ffd040"/>
<path d="M2558.7 1564.5 L2562.2 1568 L2558.7 1571.5 L2555.2 1568 Z" fill="#ff3a00"/><rect x="2557.7" y="1567" width="2" height="2" fill="#ffd040"/>
<path d="M2543.4 1575.5 L2546.9 1579 L2543.4 1582.5 L2539.9 1579 Z" fill="#ff3a00"/><rect x="2542.4" y="1578" width="2" height="2" fill="#ffd040"/>
<path d="M2558.7 1583.5 L2562.2 1587 L2558.7 1590.5 L2555.2 1587 Z" fill="#ff3a00"/><rect x="2557.7" y="1586" width="2" height="2" fill="#ffd040"/>
<path d="M2499.5 1594.5 L2503.0 1598 L2499.5 1601.5 L2496.0 1598 Z" fill="#ff3a00"/><rect x="2498.5" y="1597" width="2" height="2" fill="#ffd040"/>
<path d="M2108 1599.2 L2111.5 1602.7 L2108 1606.2 L2104.5 1602.7 Z" fill="#ff3a00"/><rect x="2107" y="1601.7" width="2" height="2" fill="#ffd040"/>
<path d="M1795 1618.9 L1798.5 1622.4 L1795 1625.9 L1791.5 1622.4 Z" fill="#ff3a00"/><rect x="1794" y="1621.4" width="2" height="2" fill="#ffd040"/>
<path d="M1830 1616.5 L1833.5 1620 L1830 1623.5 L1826.5 1620 Z" fill="#ff3a00"/><rect x="1829" y="1619" width="2" height="2" fill="#ffd040"/>
<path d="M1976.6 1618.9 L1980.1 1622.4 L1976.6 1625.9 L1973.1 1622.4 Z" fill="#ff3a00"/><rect x="1975.6" y="1621.4" width="2" height="2" fill="#ffd040"/>
<path d="M2545.4 1623.3 L2548.9 1626.8 L2545.4 1630.3 L2541.9 1626.8 Z" fill="#ff3a00"/><rect x="2544.4" y="1625.8" width="2" height="2" fill="#ffd040"/>
<path d="M2545.4 1636.5 L2548.9 1640 L2545.4 1643.5 L2541.9 1640 Z" fill="#ff3a00"/><rect x="2544.4" y="1639" width="2" height="2" fill="#ffd040"/>
<path d="M1718.5 1649.5 L1722.0 1653 L1718.5 1656.5 L1715.0 1653 Z" fill="#ff3a00"/><rect x="1717.5" y="1652" width="2" height="2" fill="#ffd040"/>
<path d="M2210.5 1649.5 L2214.0 1653 L2210.5 1656.5 L2207.0 1653 Z" fill="#ff3a00"/><rect x="2209.5" y="1652" width="2" height="2" fill="#ffd040"/>
<path d="M2339.7 1647.5 L2343.2 1651 L2339.7 1654.5 L2336.2 1651 Z" fill="#ff3a00"/><rect x="2338.7" y="1650" width="2" height="2" fill="#ffd040"/>
<path d="M2346.5 1649.5 L2350.0 1653 L2346.5 1656.5 L2343.0 1653 Z" fill="#ff3a00"/><rect x="2345.5" y="1652" width="2" height="2" fill="#ffd040"/>
<path d="M2206 1676.0 L2209.5 1679.5 L2206 1683.0 L2202.5 1679.5 Z" fill="#ff3a00"/><rect x="2205" y="1678.5" width="2" height="2" fill="#ffd040"/>
<path d="M2269.7 1676.0 L2273.2 1679.5 L2269.7 1683.0 L2266.2 1679.5 Z" fill="#ff3a00"/><rect x="2268.7" y="1678.5" width="2" height="2" fill="#ffd040"/>
<path d="M2471 1667.2 L2474.5 1670.7 L2471 1674.2 L2467.5 1670.7 Z" fill="#ff3a00"/><rect x="2470" y="1669.7" width="2" height="2" fill="#ffd040"/>
<path d="M1939.5 1689.3 L1943.0 1692.8 L1939.5 1696.3 L1936.0 1692.8 Z" fill="#ff3a00"/><rect x="1938.5" y="1691.8" width="2" height="2" fill="#ffd040"/>
<path d="M2051 1684.5 L2054.5 1688 L2051 1691.5 L2047.5 1688 Z" fill="#ff3a00"/><rect x="2050" y="1687" width="2" height="2" fill="#ffd040"/>
<path d="M1832.2 1337.1 L1835.7 1340.6 L1832.2 1344.1 L1828.7 1340.6 Z" fill="#ff3a00"/><rect x="1831.2" y="1339.6" width="2" height="2" fill="#ffd040"/>
<path d="M1701.2 1369.9 L1704.7 1373.4 L1701.2 1376.9 L1697.7 1373.4 Z" fill="#ff3a00"/><rect x="1700.2" y="1372.4" width="2" height="2" fill="#ffd040"/>
<path d="M1786.6 1424.5 L1790.1 1428 L1786.6 1431.5 L1783.1 1428 Z" fill="#ff3a00"/><rect x="1785.6" y="1427" width="2" height="2" fill="#ffd040"/>
<path d="M1519.8 1439.8 L1523.3 1443.3 L1519.8 1446.8 L1516.3 1443.3 Z" fill="#ff3a00"/><rect x="1518.8" y="1442.3" width="2" height="2" fill="#ffd040"/>
<path d="M1731.5 1455.0 L1735.0 1458.5 L1731.5 1462.0 L1728.0 1458.5 Z" fill="#ff3a00"/><rect x="1730.5" y="1457.5" width="2" height="2" fill="#ffd040"/>
<path d="M1545.8 1485.7 L1549.3 1489.2 L1545.8 1492.7 L1542.3 1489.2 Z" fill="#ff3a00"/><rect x="1544.8" y="1488.2" width="2" height="2" fill="#ffd040"/>
<path d="M1607 1481.3 L1610.5 1484.8 L1607 1488.3 L1603.5 1484.8 Z" fill="#ff3a00"/><rect x="1606" y="1483.8" width="2" height="2" fill="#ffd040"/>
<path d="M1661.3 1549.2 L1664.8 1552.7 L1661.3 1556.2 L1657.8 1552.7 Z" fill="#ff3a00"/><rect x="1660.3" y="1551.7" width="2" height="2" fill="#ffd040"/>
<path d="M1733.9 1581.5 L1737.4 1585 L1733.9 1588.5 L1730.4 1585 Z" fill="#ff3a00"/><rect x="1732.9" y="1584" width="2" height="2" fill="#ffd040"/>
<path d="M1637.3 1614.7 L1640.8 1618.2 L1637.3 1621.7 L1633.8 1618.2 Z" fill="#ff3a00"/><rect x="1636.3" y="1617.2" width="2" height="2" fill="#ffd040"/>
<path d="M1629.2 1621.2 L1632.7 1624.7 L1629.2 1628.2 L1625.7 1624.7 Z" fill="#ff3a00"/><rect x="1628.2" y="1623.7" width="2" height="2" fill="#ffd040"/>
<path d="M1794.7 1619.1 L1798.2 1622.6 L1794.7 1626.1 L1791.2 1622.6 Z" fill="#ff3a00"/><rect x="1793.7" y="1621.6" width="2" height="2" fill="#ffd040"/>
<path d="M1830 1617.1 L1833.5 1620.6 L1830 1624.1 L1826.5 1620.6 Z" fill="#ff3a00"/><rect x="1829" y="1619.6" width="2" height="2" fill="#ffd040"/>
<path d="M1718.7 1649.9 L1722.2 1653.4 L1718.7 1656.9 L1715.2 1653.4 Z" fill="#ff3a00"/><rect x="1717.7" y="1652.4" width="2" height="2" fill="#ffd040"/>
<path d="M1528.6 1667.1 L1532.1 1670.6 L1528.6 1674.1 L1525.1 1670.6 Z" fill="#ff3a00"/><rect x="1527.6" y="1669.6" width="2" height="2" fill="#ffd040"/>
<path d="M1543.8 1662.7 L1547.3 1666.2 L1543.8 1669.7 L1540.3 1666.2 Z" fill="#ff3a00"/><rect x="1542.8" y="1665.2" width="2" height="2" fill="#ffd040"/>
<path d="M1670.4 1673.8 L1673.9 1677.3 L1670.4 1680.8 L1666.9 1677.3 Z" fill="#ff3a00"/><rect x="1669.4" y="1676.3" width="2" height="2" fill="#ffd040"/>
<path d="M1578.6 1693.1 L1582.1 1696.6 L1578.6 1700.1 L1575.1 1696.6 Z" fill="#ff3a00"/><rect x="1577.6" y="1695.6" width="2" height="2" fill="#ffd040"/>
<path d="M1600.5 1689.0 L1604.0 1692.5 L1600.5 1696.0 L1597.0 1692.5 Z" fill="#ff3a00"/><rect x="1599.5" y="1691.5" width="2" height="2" fill="#ffd040"/>
<path d="M2044.4 1273.5 L2047.9 1277 L2044.4 1280.5 L2040.9 1277 Z" fill="#ff3a00"/><rect x="2043.4" y="1276" width="2" height="2" fill="#ffd040"/>
<path d="M2337.5 1262.7 L2341.0 1266.2 L2337.5 1269.7 L2334.0 1266.2 Z" fill="#ff3a00"/><rect x="2336.5" y="1265.2" width="2" height="2" fill="#ffd040"/>
<path d="M2315.9 1286.8 L2319.4 1290.3 L2315.9 1293.8 L2312.4 1290.3 Z" fill="#ff3a00"/><rect x="2314.9" y="1289.3" width="2" height="2" fill="#ffd040"/>
<path d="M2462.2 1289.0 L2465.7 1292.5 L2462.2 1296.0 L2458.7 1292.5 Z" fill="#ff3a00"/><rect x="2461.2" y="1291.5" width="2" height="2" fill="#ffd040"/>
<circle cx="1889" cy="1417" r="6" fill="#ff4000"/><circle cx="1889" cy="1417" r="3.6" fill="#ffff40"/>
<circle cx="1895" cy="1446.5" r="6" fill="#ff4000"/><circle cx="1895" cy="1446.5" r="3.6" fill="#ffff40"/>
<circle cx="2118.7" cy="1399.8" r="6" fill="#ff4000"/><circle cx="2118.7" cy="1399.8" r="3.6" fill="#ffff40"/>
<circle cx="2527.7" cy="1308.8" r="7" fill="#ff4000"/><circle cx="2527.7" cy="1308.8" r="4.2" fill="#ffff40"/>
<circle cx="2481.8" cy="1517.7" r="6" fill="#ff4000"/><circle cx="2481.8" cy="1517.7" r="3.6" fill="#ffff40"/>
<circle cx="1944.8" cy="1593" r="6" fill="#ff4000"/><circle cx="1944.8" cy="1593" r="3.6" fill="#ffff40"/>
<circle cx="2400.9" cy="1677" r="6" fill="#ff4000"/><circle cx="2400.9" cy="1677" r="3.6" fill="#ffff40"/>
<circle cx="1591.7" cy="1574.3" r="6" fill="#ff4000"/><circle cx="1591.7" cy="1574.3" r="3.6" fill="#ffff40"/>
</g>
<rect x="721.5" y="457" width="1620.5" height="1008" fill="none" stroke="#e87800" stroke-width="2.4"/>
<rect x="1010.5" y="566" width="1043" height="789.5" fill="none" stroke="#d40000" stroke-width="3"/>
<text x="1491" y="449" font-family="Liberation Sans" font-size="22.5" fill="#c8c8c8" transform="translate(0 449) scale(1 1.15) translate(0 -449)">IMX174</text>
<text x="1491" y="559" font-family="Liberation Sans" font-size="22.5" fill="#c8c8c8" transform="translate(0 559) scale(1 1.15) translate(0 -559)">IMX430</text>
<circle cx="1533" cy="961" r="1120" fill="none" stroke="#8000a0" stroke-width="1.7" clip-path="url(#mc)"/>
<ellipse cx="2385.6" cy="1509" rx="12" ry="8" fill="none" stroke="#e00000" stroke-width="2"/>
<g stroke="#8a8a8a" stroke-width="2"><line x1="1533" y1="962" x2="2547" y2="962"/><line x1="1537" y1="930" x2="1537" y2="962"/><line x1="1808" y1="931" x2="1808" y2="962"/><line x1="2178" y1="931" x2="2178" y2="962"/><line x1="2547" y1="931" x2="2547" y2="962"/></g>
<circle cx="1808" cy="962" r="3" fill="#00e000"/><circle cx="2178" cy="962" r="6.5" fill="#00e000"/><circle cx="2547" cy="962" r="3" fill="#00e000"/>
<text x="1808" y="920" font-family="Liberation Sans" font-weight="bold" font-size="24" fill="#d8d8d8" letter-spacing="-0.4">17:36</text>
<text x="2178" y="920" font-family="Liberation Sans" font-weight="bold" font-size="24" fill="#d8d8d8" letter-spacing="-0.4">17:35</text>
<text x="2547" y="920" font-family="Liberation Sans" font-weight="bold" font-size="24" fill="#d8d8d8" letter-spacing="-0.4">17:34</text>
<text x="1283" y="920" font-family="Liberation Sans" font-weight="bold" font-size="24" fill="#d8d8d8" letter-spacing="-0.4">02/14/2023 17:36:44 UT</text>
<g transform="translate(1533 962)">
<g transform="rotate(0)"><path d="M14 -2 L44 -6 Q50 0 44 6 L14 2 Z" fill="#ff4848"/><line x1="15" y1="0" x2="40" y2="0" stroke="#30a030" stroke-width="2"/></g>
<g transform="rotate(90)"><path d="M14 -2 L44 -6 Q50 0 44 6 L14 2 Z" fill="#ff4848"/><line x1="15" y1="0" x2="40" y2="0" stroke="#30a030" stroke-width="2"/></g>
<g transform="rotate(180)"><path d="M14 -2 L44 -6 Q50 0 44 6 L14 2 Z" fill="#ff4848"/><line x1="15" y1="0" x2="40" y2="0" stroke="#30a030" stroke-width="2"/></g>
<g transform="rotate(270)"><path d="M14 -2 L44 -6 Q50 0 44 6 L14 2 Z" fill="#ff4848"/><line x1="15" y1="0" x2="40" y2="0" stroke="#30a030" stroke-width="2"/></g>
<path d="M-10 -10 L10 10 M10 -10 L-10 10" stroke="#d00000" stroke-width="2"/><circle cx="3" cy="0" r="2.5" fill="#00ff00"/>
</g>
<g stroke="#7a0000" stroke-width="2.5"><line x1="473" y1="222.5" x2="2653" y2="222.5"/><line x1="411.5" y1="288" x2="411.5" y2="1699"/><line x1="2652" y1="250" x2="2652" y2="1699"/><line x1="411" y1="1698.5" x2="2653" y2="1698.5"/></g>
<rect x="403" y="217" width="70" height="70" fill="#000"/>
<circle cx="437" cy="251" r="28" fill="#000080" stroke="#c8c8c8" stroke-width="2"/>
<path d="M409 251 H437" stroke="#e07090" stroke-width="2"/><path d="M437 251 V279" stroke="#d8c040" stroke-width="2"/>
<path d="M437 216 L442 221 L437 226 L432 221 Z" fill="#00e0e0"/>
<path d="M409 246 L414 251 L409 256 L404 251 Z" fill="#00e0e0"/>
<path d="M465 246 L470 251 L465 256 L460 251 Z" fill="#00e0e0"/>
<path d="M437 276 L442 281 L437 286 L432 281 Z" fill="#00e0e0"/>
<rect x="482" y="222" width="90" height="30" fill="#ffc0c0"/><text x="503" y="246" font-family="Liberation Sans" font-size="24" fill="#a01818" transform="translate(0 246) scale(1 1.05) translate(0 -246)">Field</text>
<rect x="576" y="222" width="90" height="30" fill="#808080"/><text x="581" y="246" font-family="Liberation Sans" font-size="24" fill="#dcdcdc" transform="translate(0 246) scale(1 1.05) translate(0 -246)">Horizon</text>
<rect x="2480" y="224" width="79" height="26" fill="#808080"/><text x="2483" y="244" font-family="Liberation Sans" font-size="21" fill="#e8e870" stroke="#e8e870" stroke-width="0.3" transform="translate(0 244) scale(1 1.12) translate(0 -244)">UCAC4</text>
<rect x="2562" y="224" width="94" height="26" fill="#008000"/><text x="2566" y="244" font-family="Liberation Sans" font-size="21" fill="#e8f060" stroke="#e8f060" stroke-width="0.3" transform="translate(0 244) scale(1 1.12) translate(0 -244)">RNGCIC</text>
<rect x="473" y="254" width="50" height="27" fill="#000" stroke="#5e5e5e" stroke-width="2.2"/>
<text x="474" y="276" font-family="Liberation Sans" font-size="22.5" fill="#d8d040" stroke="#d8d040" stroke-width="0.6" transform="translate(0 276) scale(1 1.18) translate(0 -276)">1°50'</text>
<rect x="454" y="505" width="40" height="27" fill="#000" stroke="#5e5e5e" stroke-width="2.2"/>
<text x="459" y="527" font-family="Liberation Sans" font-size="22.5" fill="#d8d040" stroke="#d8d040" stroke-width="0.6" transform="translate(0 527) scale(1 1.18) translate(0 -527)">12°</text>
<rect x="454" y="757" width="71" height="26" fill="#000" stroke="#5e5e5e" stroke-width="2.2"/>
<text x="459" y="778" font-family="Liberation Sans" font-size="22.5" fill="#d8d040" stroke="#d8d040" stroke-width="0.6" transform="translate(0 778) scale(1 1.18) translate(0 -778)">12°10'</text>
<rect x="456" y="1008" width="69" height="26" fill="#000" stroke="#5e5e5e" stroke-width="2.2"/>
<text x="461" y="1029" font-family="Liberation Sans" font-size="22.5" fill="#d8d040" stroke="#d8d040" stroke-width="0.6" transform="translate(0 1029) scale(1 1.18) translate(0 -1029)">12°20'</text>
<rect x="456" y="1259" width="72" height="27" fill="#000" stroke="#5e5e5e" stroke-width="2.2"/>
<text x="461" y="1281" font-family="Liberation Sans" font-size="22.5" fill="#d8d040" stroke="#d8d040" stroke-width="0.6" transform="translate(0 1281) scale(1 1.18) translate(0 -1281)">12°30'</text>
<rect x="456" y="1511" width="72" height="27" fill="#000" stroke="#5e5e5e" stroke-width="2.2"/>
<text x="461" y="1533" font-family="Liberation Sans" font-size="22.5" fill="#d8d040" stroke="#d8d040" stroke-width="0.6" transform="translate(0 1533) scale(1 1.18) translate(0 -1533)">12°40'</text>
<rect x="568" y="1600" width="60" height="28" fill="#000" stroke="#5e5e5e" stroke-width="2.2"/>
<text x="572" y="1624" font-family="Liberation Sans" font-size="22.5" fill="#c4c4c4" stroke="#c4c4c4" stroke-width="0.5">2h5m</text>
<rect x="935" y="1598" width="63" height="30" fill="#000" stroke="#5e5e5e" stroke-width="2.2"/>
<text x="939" y="1624" font-family="Liberation Sans" font-size="22.5" fill="#c4c4c4" stroke="#c4c4c4" stroke-width="0.5">2h4m</text>
<rect x="1303" y="1598" width="62" height="28" fill="#000" stroke="#5e5e5e" stroke-width="2.2"/>
<text x="1307" y="1622" font-family="Liberation Sans" font-size="22.5" fill="#c4c4c4" stroke="#c4c4c4" stroke-width="0.5">2h3m</text>
<rect x="1670" y="1598" width="63" height="28" fill="#000" stroke="#5e5e5e" stroke-width="2.2"/>
<text x="1674" y="1622" font-family="Liberation Sans" font-size="22.5" fill="#c4c4c4" stroke="#c4c4c4" stroke-width="0.5">2h2m</text>
<rect x="2039" y="1599" width="62" height="29" fill="#000" stroke="#5e5e5e" stroke-width="2.2"/>
<text x="2043" y="1624" font-family="Liberation Sans" font-size="22.5" fill="#c4c4c4" stroke="#c4c4c4" stroke-width="0.5">2h1m</text>
<rect x="2423" y="1600" width="31" height="28" fill="#000" stroke="#5e5e5e" stroke-width="2.2"/>
<text x="2427" y="1624" font-family="Liberation Sans" font-size="22.5" fill="#c4c4c4" stroke="#c4c4c4" stroke-width="0.5">2h</text>
</svg>
</body></html>
